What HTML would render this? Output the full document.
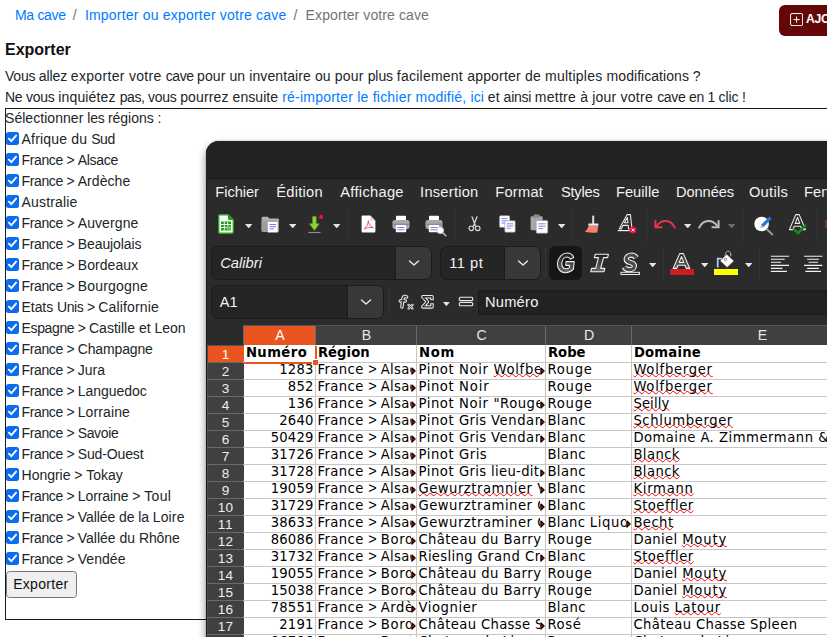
<!DOCTYPE html>
<html lang="fr">
<head>
<meta charset="utf-8">
<title>Exporter votre cave</title>
<style>
html,body{margin:0;padding:0;background:#fff;}
html{overflow:hidden;}
body{width:827px;height:637px;overflow:hidden;font-family:"Liberation Sans",sans-serif;color:#212529;}
#root{position:relative;width:827px;height:637px;overflow:hidden;contain:paint;}
.a{position:absolute;display:block;}
.t{position:absolute;white-space:pre;}
.t u{text-decoration:underline wavy #f00;text-decoration-thickness:1.3px;text-underline-offset:-1.4px;text-decoration-skip-ink:none;}
.clip{position:absolute;overflow:hidden;}
#box{left:5px;top:108px;width:840px;height:510px;border:1px solid #1a1a1a;}
#addbtn{left:779px;top:5px;width:80px;height:31px;background:#640707;border-radius:6px;}
.cb{left:6px;width:13px;height:13px;border-radius:2.5px;background:#0b6cf2;}
.cb svg{display:block;}
#exp{left:6px;top:571px;width:71px;height:27px;box-sizing:border-box;border:1px solid #767676;border-radius:3.5px;background:#efefef;}
#winshadow{left:206px;top:141px;width:700px;height:600px;border-top-left-radius:13px;box-shadow:0 4px 9px 0 rgba(0,0,0,.45),0 0 2px rgba(0,0,0,.2);}
#win{left:206px;top:141px;width:700px;height:600px;background:#2b2b2b;border-top-left-radius:13px;overflow:hidden;box-shadow:inset 1px 0 0 #1c1c1c;}
#title{left:0;top:0;width:700px;height:37px;background:#222;border-bottom:1px solid #171717;}
.sep{width:1px;background:#353535;}
.box{box-sizing:border-box;border:1px solid #1b1b1b;border-radius:7px;background:#252525;overflow:hidden;}
.box .dd{position:absolute;top:0;bottom:0;right:0;background:#383838;border-left:1px solid #1b1b1b;}
#sheet{left:244px;top:345px;width:600px;height:300px;background:#fff;}
#colhdr{left:243px;top:325px;width:600px;height:20px;background:#404040;box-shadow:inset 0 1px 0 #555;}
#rowhdr{left:208px;top:345px;width:36px;height:300px;background:#404040;}
.sel{background:#e95420;}
.hs{background:#6a6a6a;}
.gl{background:#c6c6c6;}
#cursor{border:solid #e95420;border-width:0 2px 2px 0;box-sizing:content-box;}
</style>
</head>
<body>
<div id="root">
<div class="a" id="box"></div>
<div class="a" id="addbtn"><svg class="a" style="left:11px;top:7.7px" width="13.2" height="13.2" viewBox="0 0 13.2 13.2"><rect x=".55" y=".55" width="12.1" height="12.1" rx="1.5" fill="none" stroke="#fff" stroke-width="1"/><path d="M6.6 3.5v6.2M3.5 6.6h6.2" stroke="#fff" stroke-width="1"/></svg></div>
<div class="a cb" style="top:132px"><svg width="13" height="13" viewBox="0 0 13 13"><path d="M2.9 6.7l2.4 2.5 4.8-5.6" fill="none" stroke="#fff" stroke-width="1.9" stroke-linecap="round" stroke-linejoin="round"/></svg></div>
<div class="a cb" style="top:153px"><svg width="13" height="13" viewBox="0 0 13 13"><path d="M2.9 6.7l2.4 2.5 4.8-5.6" fill="none" stroke="#fff" stroke-width="1.9" stroke-linecap="round" stroke-linejoin="round"/></svg></div>
<div class="a cb" style="top:174px"><svg width="13" height="13" viewBox="0 0 13 13"><path d="M2.9 6.7l2.4 2.5 4.8-5.6" fill="none" stroke="#fff" stroke-width="1.9" stroke-linecap="round" stroke-linejoin="round"/></svg></div>
<div class="a cb" style="top:195px"><svg width="13" height="13" viewBox="0 0 13 13"><path d="M2.9 6.7l2.4 2.5 4.8-5.6" fill="none" stroke="#fff" stroke-width="1.9" stroke-linecap="round" stroke-linejoin="round"/></svg></div>
<div class="a cb" style="top:216px"><svg width="13" height="13" viewBox="0 0 13 13"><path d="M2.9 6.7l2.4 2.5 4.8-5.6" fill="none" stroke="#fff" stroke-width="1.9" stroke-linecap="round" stroke-linejoin="round"/></svg></div>
<div class="a cb" style="top:237px"><svg width="13" height="13" viewBox="0 0 13 13"><path d="M2.9 6.7l2.4 2.5 4.8-5.6" fill="none" stroke="#fff" stroke-width="1.9" stroke-linecap="round" stroke-linejoin="round"/></svg></div>
<div class="a cb" style="top:258px"><svg width="13" height="13" viewBox="0 0 13 13"><path d="M2.9 6.7l2.4 2.5 4.8-5.6" fill="none" stroke="#fff" stroke-width="1.9" stroke-linecap="round" stroke-linejoin="round"/></svg></div>
<div class="a cb" style="top:279px"><svg width="13" height="13" viewBox="0 0 13 13"><path d="M2.9 6.7l2.4 2.5 4.8-5.6" fill="none" stroke="#fff" stroke-width="1.9" stroke-linecap="round" stroke-linejoin="round"/></svg></div>
<div class="a cb" style="top:300px"><svg width="13" height="13" viewBox="0 0 13 13"><path d="M2.9 6.7l2.4 2.5 4.8-5.6" fill="none" stroke="#fff" stroke-width="1.9" stroke-linecap="round" stroke-linejoin="round"/></svg></div>
<div class="a cb" style="top:321px"><svg width="13" height="13" viewBox="0 0 13 13"><path d="M2.9 6.7l2.4 2.5 4.8-5.6" fill="none" stroke="#fff" stroke-width="1.9" stroke-linecap="round" stroke-linejoin="round"/></svg></div>
<div class="a cb" style="top:342px"><svg width="13" height="13" viewBox="0 0 13 13"><path d="M2.9 6.7l2.4 2.5 4.8-5.6" fill="none" stroke="#fff" stroke-width="1.9" stroke-linecap="round" stroke-linejoin="round"/></svg></div>
<div class="a cb" style="top:363px"><svg width="13" height="13" viewBox="0 0 13 13"><path d="M2.9 6.7l2.4 2.5 4.8-5.6" fill="none" stroke="#fff" stroke-width="1.9" stroke-linecap="round" stroke-linejoin="round"/></svg></div>
<div class="a cb" style="top:384px"><svg width="13" height="13" viewBox="0 0 13 13"><path d="M2.9 6.7l2.4 2.5 4.8-5.6" fill="none" stroke="#fff" stroke-width="1.9" stroke-linecap="round" stroke-linejoin="round"/></svg></div>
<div class="a cb" style="top:405px"><svg width="13" height="13" viewBox="0 0 13 13"><path d="M2.9 6.7l2.4 2.5 4.8-5.6" fill="none" stroke="#fff" stroke-width="1.9" stroke-linecap="round" stroke-linejoin="round"/></svg></div>
<div class="a cb" style="top:426px"><svg width="13" height="13" viewBox="0 0 13 13"><path d="M2.9 6.7l2.4 2.5 4.8-5.6" fill="none" stroke="#fff" stroke-width="1.9" stroke-linecap="round" stroke-linejoin="round"/></svg></div>
<div class="a cb" style="top:447px"><svg width="13" height="13" viewBox="0 0 13 13"><path d="M2.9 6.7l2.4 2.5 4.8-5.6" fill="none" stroke="#fff" stroke-width="1.9" stroke-linecap="round" stroke-linejoin="round"/></svg></div>
<div class="a cb" style="top:468px"><svg width="13" height="13" viewBox="0 0 13 13"><path d="M2.9 6.7l2.4 2.5 4.8-5.6" fill="none" stroke="#fff" stroke-width="1.9" stroke-linecap="round" stroke-linejoin="round"/></svg></div>
<div class="a cb" style="top:489px"><svg width="13" height="13" viewBox="0 0 13 13"><path d="M2.9 6.7l2.4 2.5 4.8-5.6" fill="none" stroke="#fff" stroke-width="1.9" stroke-linecap="round" stroke-linejoin="round"/></svg></div>
<div class="a cb" style="top:510px"><svg width="13" height="13" viewBox="0 0 13 13"><path d="M2.9 6.7l2.4 2.5 4.8-5.6" fill="none" stroke="#fff" stroke-width="1.9" stroke-linecap="round" stroke-linejoin="round"/></svg></div>
<div class="a cb" style="top:531px"><svg width="13" height="13" viewBox="0 0 13 13"><path d="M2.9 6.7l2.4 2.5 4.8-5.6" fill="none" stroke="#fff" stroke-width="1.9" stroke-linecap="round" stroke-linejoin="round"/></svg></div>
<div class="a cb" style="top:552px"><svg width="13" height="13" viewBox="0 0 13 13"><path d="M2.9 6.7l2.4 2.5 4.8-5.6" fill="none" stroke="#fff" stroke-width="1.9" stroke-linecap="round" stroke-linejoin="round"/></svg></div>
<div class="a" id="exp"></div>
<span class="t" style="left:15.00px;top:5.85px;font-size:14px;line-height:18px;letter-spacing:-0.310px;color:#007bff;">Ma cave</span>
<span class="t" style="left:72.75px;top:5.85px;font-size:14px;line-height:18px;letter-spacing:1.266px;color:#6c757d;">/</span>
<span class="t" style="left:84.91px;top:5.85px;font-size:14px;line-height:18px;letter-spacing:0.202px;color:#007bff;">Importer ou exporter votre cave</span>
<span class="t" style="left:293.47px;top:5.85px;font-size:14px;line-height:18px;letter-spacing:1.266px;color:#6c757d;">/</span>
<span class="t" style="left:305.62px;top:5.85px;font-size:14px;line-height:18px;letter-spacing:0.104px;color:#6c757d;">Exporter votre cave</span>
<span class="t" style="left:5.00px;top:38.86px;font-size:16px;line-height:21px;color:#111;font-weight:bold;">Exporter</span>
<span class="t" style="left:5.00px;top:66.75px;font-size:14px;line-height:18px;letter-spacing:-0.234px;color:#212529;">Vous </span>
<span class="t" style="left:38.86px;top:66.75px;font-size:14px;line-height:18px;letter-spacing:-0.130px;color:#212529;">allez </span>
<span class="t" style="left:70.77px;top:66.75px;font-size:14px;line-height:18px;letter-spacing:0.328px;color:#212529;">exporter </span>
<span class="t" style="left:128.97px;top:66.75px;font-size:14px;line-height:18px;letter-spacing:0.286px;color:#212529;">votre </span>
<span class="t" style="left:165.70px;top:66.75px;font-size:14px;line-height:18px;letter-spacing:-0.416px;color:#212529;">cave </span>
<span class="t" style="left:197.09px;top:66.75px;font-size:14px;line-height:18px;letter-spacing:0.090px;color:#212529;">pour un </span>
<span class="t" style="left:249.19px;top:66.75px;font-size:14px;line-height:18px;letter-spacing:0.109px;color:#212529;">inventaire ou </span>
<span class="t" style="left:334.78px;top:66.75px;font-size:14px;line-height:18px;letter-spacing:0.194px;color:#212529;">pour </span>
<span class="t" style="left:367.67px;top:66.75px;font-size:14px;line-height:18px;letter-spacing:-0.087px;color:#212529;">plus </span>
<span class="t" style="left:396.81px;top:66.75px;font-size:14px;line-height:18px;letter-spacing:0.240px;color:#212529;">facilement </span>
<span class="t" style="left:467.16px;top:66.75px;font-size:14px;line-height:18px;letter-spacing:0.202px;color:#212529;">apporter de </span>
<span class="t" style="left:545.08px;top:66.75px;font-size:14px;line-height:18px;letter-spacing:0.239px;color:#212529;">multiples </span>
<span class="t" style="left:606.61px;top:66.75px;font-size:14px;line-height:18px;letter-spacing:0.047px;color:#212529;">modifications ?</span>
<span class="t" style="left:5.00px;top:87.55px;font-size:14px;line-height:18px;letter-spacing:-0.286px;color:#212529;">Ne </span>
<span class="t" style="left:25.94px;top:87.55px;font-size:14px;line-height:18px;letter-spacing:-0.237px;color:#212529;">vous </span>
<span class="t" style="left:58.22px;top:87.55px;font-size:14px;line-height:18px;letter-spacing:0.163px;color:#212529;">inquiétez </span>
<span class="t" style="left:119.78px;top:87.55px;font-size:14px;line-height:18px;letter-spacing:-0.447px;color:#212529;">pas, </span>
<span class="t" style="left:147.91px;top:87.55px;font-size:14px;line-height:18px;letter-spacing:-0.237px;color:#212529;">vous </span>
<span class="t" style="left:180.19px;top:87.55px;font-size:14px;line-height:18px;letter-spacing:0.125px;color:#212529;">pourrez </span>
<span class="t" style="left:232.55px;top:87.55px;font-size:14px;line-height:18px;letter-spacing:0.070px;color:#212529;">ensuite </span>
<span class="t" style="left:282.16px;top:87.55px;font-size:14px;line-height:18px;letter-spacing:0.228px;color:#007bff;">ré-importer le </span>
<span class="t" style="left:372.72px;top:87.55px;font-size:14px;line-height:18px;letter-spacing:0.207px;color:#007bff;">fichier </span>
<span class="t" style="left:415.61px;top:87.55px;font-size:14px;line-height:18px;letter-spacing:0.229px;color:#007bff;">modifié, </span>
<span class="t" style="left:470.59px;top:87.55px;font-size:14px;line-height:18px;letter-spacing:0.031px;color:#007bff;">ici</span>
<span class="t" style="left:483.92px;top:87.55px;font-size:14px;line-height:18px;letter-spacing:0.047px;color:#212529;"> et </span>
<span class="t" style="left:503.58px;top:87.55px;font-size:14px;line-height:18px;letter-spacing:-0.234px;color:#212529;">ainsi </span>
<span class="t" style="left:534.86px;top:87.55px;font-size:14px;line-height:18px;letter-spacing:0.245px;color:#212529;">mettre à </span>
<span class="t" style="left:592.31px;top:87.55px;font-size:14px;line-height:18px;letter-spacing:0.175px;color:#212529;">jour </span>
<span class="t" style="left:620.42px;top:87.55px;font-size:14px;line-height:18px;letter-spacing:0.286px;color:#212529;">votre </span>
<span class="t" style="left:657.16px;top:87.55px;font-size:14px;line-height:18px;letter-spacing:-0.319px;color:#212529;">cave en 1 </span>
<span class="t" style="left:718.58px;top:87.55px;font-size:14px;line-height:18px;letter-spacing:-0.141px;color:#212529;">clic !</span>
<span class="t" style="left:5.00px;top:109.25px;font-size:14px;line-height:18px;letter-spacing:0.044px;color:#212529;">Sélectionner </span>
<span class="t" style="left:87.30px;top:109.25px;font-size:14px;line-height:18px;letter-spacing:-0.277px;color:#212529;">les </span>
<span class="t" style="left:107.98px;top:109.25px;font-size:14px;line-height:18px;letter-spacing:-0.035px;color:#212529;">régions :</span>
<span class="t" style="left:21.60px;top:130.45px;font-size:14px;line-height:18px;letter-spacing:0.176px;color:#212529;">Afrique du </span>
<span class="t" style="left:91.26px;top:130.45px;font-size:14px;line-height:18px;letter-spacing:-0.464px;color:#212529;">Sud</span>
<span class="t" style="left:21.60px;top:151.45px;font-size:14px;line-height:18px;letter-spacing:-0.378px;color:#212529;">France &gt; </span>
<span class="t" style="left:77.72px;top:151.45px;font-size:14px;line-height:18px;letter-spacing:-0.297px;color:#212529;">Alsace</span>
<span class="t" style="left:21.60px;top:172.45px;font-size:14px;line-height:18px;letter-spacing:-0.378px;color:#212529;">France &gt; </span>
<span class="t" style="left:77.72px;top:172.45px;font-size:14px;line-height:18px;letter-spacing:0.056px;color:#212529;">Ardèche</span>
<span class="t" style="left:21.60px;top:193.45px;font-size:14px;line-height:18px;letter-spacing:0.167px;color:#212529;">Australie</span>
<span class="t" style="left:21.60px;top:214.45px;font-size:14px;line-height:18px;letter-spacing:-0.378px;color:#212529;">France &gt; </span>
<span class="t" style="left:77.72px;top:214.45px;font-size:14px;line-height:18px;letter-spacing:0.092px;color:#212529;">Auvergne</span>
<span class="t" style="left:21.60px;top:235.45px;font-size:14px;line-height:18px;letter-spacing:-0.378px;color:#212529;">France &gt; </span>
<span class="t" style="left:77.72px;top:235.45px;font-size:14px;line-height:18px;letter-spacing:-0.083px;color:#212529;">Beaujolais</span>
<span class="t" style="left:21.60px;top:256.45px;font-size:14px;line-height:18px;letter-spacing:-0.378px;color:#212529;">France &gt; </span>
<span class="t" style="left:77.72px;top:256.45px;font-size:14px;line-height:18px;letter-spacing:0.078px;color:#212529;">Bordeaux</span>
<span class="t" style="left:21.60px;top:277.45px;font-size:14px;line-height:18px;letter-spacing:-0.378px;color:#212529;">France &gt; </span>
<span class="t" style="left:77.72px;top:277.45px;font-size:14px;line-height:18px;letter-spacing:0.208px;color:#212529;">Bourgogne</span>
<span class="t" style="left:21.60px;top:298.45px;font-size:14px;line-height:18px;letter-spacing:-0.081px;color:#212529;">Etats </span>
<span class="t" style="left:56.91px;top:298.45px;font-size:14px;line-height:18px;letter-spacing:-0.375px;color:#212529;">Unis &gt; </span>
<span class="t" style="left:98.26px;top:298.45px;font-size:14px;line-height:18px;letter-spacing:0.167px;color:#212529;">Californie</span>
<span class="t" style="left:21.60px;top:319.45px;font-size:14px;line-height:18px;letter-spacing:-0.383px;color:#212529;">Espagne &gt; </span>
<span class="t" style="left:89.01px;top:319.45px;font-size:14px;line-height:18px;letter-spacing:0.010px;color:#212529;">Castille et </span>
<span class="t" style="left:154.49px;top:319.45px;font-size:14px;line-height:18px;letter-spacing:-0.027px;color:#212529;">Leon</span>
<span class="t" style="left:21.60px;top:340.45px;font-size:14px;line-height:18px;letter-spacing:-0.378px;color:#212529;">France &gt; </span>
<span class="t" style="left:77.72px;top:340.45px;font-size:14px;line-height:18px;letter-spacing:-0.141px;color:#212529;">Champagne</span>
<span class="t" style="left:21.60px;top:361.45px;font-size:14px;line-height:18px;letter-spacing:-0.378px;color:#212529;">France &gt; </span>
<span class="t" style="left:77.72px;top:361.45px;font-size:14px;line-height:18px;letter-spacing:0.035px;color:#212529;">Jura</span>
<span class="t" style="left:21.60px;top:382.45px;font-size:14px;line-height:18px;letter-spacing:-0.378px;color:#212529;">France &gt; </span>
<span class="t" style="left:77.72px;top:382.45px;font-size:14px;line-height:18px;letter-spacing:-0.033px;color:#212529;">Languedoc</span>
<span class="t" style="left:21.60px;top:403.45px;font-size:14px;line-height:18px;letter-spacing:-0.378px;color:#212529;">France &gt; </span>
<span class="t" style="left:77.72px;top:403.45px;font-size:14px;line-height:18px;letter-spacing:0.107px;color:#212529;">Lorraine</span>
<span class="t" style="left:21.60px;top:424.45px;font-size:14px;line-height:18px;letter-spacing:-0.378px;color:#212529;">France &gt; </span>
<span class="t" style="left:77.72px;top:424.45px;font-size:14px;line-height:18px;letter-spacing:-0.359px;color:#212529;">Savoie</span>
<span class="t" style="left:21.60px;top:445.45px;font-size:14px;line-height:18px;letter-spacing:-0.378px;color:#212529;">France &gt; </span>
<span class="t" style="left:77.72px;top:445.45px;font-size:14px;line-height:18px;letter-spacing:-0.130px;color:#212529;">Sud-Ouest</span>
<span class="t" style="left:21.60px;top:466.45px;font-size:14px;line-height:18px;letter-spacing:-0.023px;color:#212529;">Hongrie &gt; </span>
<span class="t" style="left:86.35px;top:466.45px;font-size:14px;line-height:18px;letter-spacing:-0.056px;color:#212529;">Tokay</span>
<span class="t" style="left:21.60px;top:487.45px;font-size:14px;line-height:18px;letter-spacing:-0.378px;color:#212529;">France &gt; </span>
<span class="t" style="left:77.72px;top:487.45px;font-size:14px;line-height:18px;letter-spacing:-0.071px;color:#212529;">Lorraine &gt; </span>
<span class="t" style="left:144.27px;top:487.45px;font-size:14px;line-height:18px;letter-spacing:0.320px;color:#212529;">Toul</span>
<span class="t" style="left:21.60px;top:508.45px;font-size:14px;line-height:18px;letter-spacing:-0.378px;color:#212529;">France &gt; </span>
<span class="t" style="left:77.72px;top:508.45px;font-size:14px;line-height:18px;letter-spacing:-0.072px;color:#212529;">Vallée de la </span>
<span class="t" style="left:152.80px;top:508.45px;font-size:14px;line-height:18px;letter-spacing:0.122px;color:#212529;">Loire</span>
<span class="t" style="left:21.60px;top:529.45px;font-size:14px;line-height:18px;letter-spacing:-0.378px;color:#212529;">France &gt; </span>
<span class="t" style="left:77.72px;top:529.45px;font-size:14px;line-height:18px;letter-spacing:0.002px;color:#212529;">Vallée du </span>
<span class="t" style="left:138.97px;top:529.45px;font-size:14px;line-height:18px;letter-spacing:-0.122px;color:#212529;">Rhône</span>
<span class="t" style="left:21.60px;top:550.45px;font-size:14px;line-height:18px;letter-spacing:-0.378px;color:#212529;">France &gt; </span>
<span class="t" style="left:77.72px;top:550.45px;font-size:14px;line-height:18px;letter-spacing:0.044px;color:#212529;">Vendée</span>
<span class="t" style="left:13.20px;top:574.65px;font-size:14px;line-height:18px;letter-spacing:0.293px;color:#111;">Exporter</span>
<span class="t" style="left:806.00px;top:11.46px;font-size:12.25px;line-height:16px;letter-spacing:-0.324px;color:#fff;font-weight:bold;">AJOUTER</span>
<div class="a" id="winshadow"></div>
<div class="a" id="win">
<div class="a" id="title"></div>
</div>
<svg class="a" style="left:218px;top:214px" width="16" height="20" viewBox="0 0 16 20"><path d="M1.5 .7h8.6l5.2 5.2v11.9a1.5 1.5 0 0 1-1.5 1.5H1.5A1 1 0 0 1 .7 18.300V1.500a.8.8 0 0 1 .8-.8z" fill="#fff" stroke="#27a21b" stroke-width="1.4"/><path d="M10 .7v4.400a.9.9 0 0 0 .9.900h4.400z" fill="#27a21b"/><rect x="3" y="7.5" width="10" height="9" fill="#1f9a1a"/><path d="M3 10.500h10M3 13.500h10M6.300 7.500v9M9.600 7.500v9" stroke="#fff" stroke-width=".9"/><rect x="8.500" y="12" width="4" height="4.500" fill="#5fd05a"/></svg>
<svg class="a" style="left:244.8px;top:224px" width="7.4" height="4.4" viewBox="0 0 7.4 4.4"><path d="M0 0H7.4L3.7 4.4z" fill="#e4e4e4"/></svg>
<svg class="a" style="left:261px;top:216px" width="19" height="17" viewBox="0 0 19 17"><path d="M.6 2.200a1.400 1.400 0 0 1 1.400-1.400h4.600l1.800 1.800h8.200a1.400 1.400 0 0 1 1.400 1.400v10.600a1.400 1.400 0 0 1-1.400 1.400H2a1.400 1.400 0 0 1-1.400-1.400z" fill="#b4b4b4"/><path d="M.6 4.500h17.400v10a1.400 1.400 0 0 1-1.400 1.400H2a1.400 1.400 0 0 1-1.400-1.400z" fill="#9d9d9d"/><rect x="6.500" y="5.500" width="10.500" height="11" rx=".8" fill="#fff" stroke="#8a8a8a" stroke-width=".5"/><path d="M8.500 8.500h6.500M8.500 10.700h6.500M8.500 12.900h4.500" stroke="#6f7df0" stroke-width="1"/></svg>
<svg class="a" style="left:288.8px;top:224px" width="7.4" height="4.4" viewBox="0 0 7.4 4.4"><path d="M0 0H7.4L3.7 4.4z" fill="#e4e4e4"/></svg>
<svg class="a" style="left:306px;top:214px" width="19" height="20" viewBox="0 0 19 20"><path d="M6.600 2.400h3.600v7.400h3.200L8.400 16.400 3.400 9.800h3.200z" fill="#93d23a" stroke="#5a9e10" stroke-width=".7" stroke-linejoin="round"/><path d="M2.300 18.500h12.200" stroke="#8e8e8e" stroke-width="1.200"/><circle cx="15.100" cy="2.900" r="2.100" fill="#e8123c"/></svg>
<svg class="a" style="left:332.8px;top:224px" width="7.4" height="4.4" viewBox="0 0 7.4 4.4"><path d="M0 0H7.4L3.7 4.4z" fill="#e4e4e4"/></svg>
<div class="a sep" style="left:347px;top:208px;height:33px"></div>
<svg class="a" style="left:361px;top:215px" width="15" height="18" viewBox="0 0 15 18"><path d="M1.800 .6h7.500l5.100 5.100v10.600a1.200 1.200 0 0 1-1.200 1.200H1.800a1.200 1.200 0 0 1-1.200-1.200V1.800A1.200 1.200 0 0 1 1.800 .6z" fill="#fff"/><path d="M9.300 .6v4a1.100 1.100 0 0 0 1.100 1.100h4z" fill="#d8d8d8"/><path d="M3 13.800c2.500-1.500 4.200-4.600 4.300-8.300.1 3.400 2 6.200 5.200 7.200-3.500-.6-6.700.1-9.500 1.100z" fill="none" stroke="#ea5a70" stroke-width="1" stroke-linejoin="round"/></svg>
<svg class="a" style="left:392px;top:215px" width="18" height="18" viewBox="0 0 18 18"><rect x="4" y=".8" width="10" height="5.500" rx=".8" fill="#fff"/><rect x=".5" y="5" width="17" height="9" rx="2.200" fill="#a9a9a9"/><rect x="1.500" y="8.600" width="15" height="2" fill="#8a8a8a"/><rect x="3.800" y="10" width="10.400" height="7.200" rx=".8" fill="#fff"/><path d="M5.500 12.500h7M5.500 14.800h7" stroke="#7a86f0" stroke-width="1.100"/></svg>
<svg class="a" style="left:425px;top:215px" width="18" height="18" viewBox="0 0 18 18"><rect x="4" y=".8" width="10" height="5.500" rx=".8" fill="#fff"/><rect x=".5" y="5" width="17" height="9" rx="2.200" fill="#a9a9a9"/><rect x="1.500" y="8.600" width="15" height="2" fill="#8a8a8a"/><rect x="3.800" y="10" width="10.400" height="7.200" rx=".8" fill="#fff"/><path d="M5.500 12.500h7M5.500 14.800h7" stroke="#7a86f0" stroke-width="1.100"/></svg>
<svg class="a" style="left:436px;top:225.5px" width="12" height="12" viewBox="0 0 12 12"><circle cx="4.400" cy="4.400" r="3.200" fill="#fff" stroke="#cfcfcf" stroke-width=".9"/><path d="M7 7l2.800 2.800" stroke="#c4c4c4" stroke-width="1.500" stroke-linecap="round"/></svg>
<div class="a sep" style="left:454px;top:208px;height:33px"></div>
<svg class="a" style="left:468px;top:216px" width="13" height="16" viewBox="0 0 13 16"><path d="M4 .8l3.600 9.400M9 .8L5.400 10.200" stroke="#d6d6d6" stroke-width="1.300" stroke-linecap="round" fill="none"/><circle cx="3.300" cy="12.300" r="2.300" fill="none" stroke="#d6d6d6" stroke-width="1.200"/><circle cx="9.700" cy="12.300" r="2.300" fill="none" stroke="#d6d6d6" stroke-width="1.200"/></svg>
<svg class="a" style="left:499px;top:215px" width="17" height="18" viewBox="0 0 17 18"><rect x=".6" y=".8" width="10" height="11.500" rx=".9" fill="#fff" stroke="#bdbdbd" stroke-width=".5"/><path d="M2.500 3.600h6M2.500 5.800h6M2.500 8h4" stroke="#7a86f0" stroke-width="1"/><rect x="5.800" y="5.800" width="10.400" height="11.400" rx=".9" fill="#fff" stroke="#9a9a9a" stroke-width=".6"/><path d="M7.800 8.800h6.400M7.800 11h6.400M7.800 13.200h4.200" stroke="#7a86f0" stroke-width="1"/></svg>
<svg class="a" style="left:530px;top:214px" width="19" height="20" viewBox="0 0 19 20"><rect x=".6" y="2.200" width="12" height="14" rx="1.400" fill="#a8a8a8"/><rect x="3.600" y=".6" width="6" height="3.400" rx="1" fill="#8c8c8c"/><rect x="6.200" y="6.400" width="11.600" height="12.800" rx=".9" fill="#fff" stroke="#8e8e8e" stroke-width=".6"/><path d="M8.400 9.800h7.200M8.400 12.200h7.200M8.400 14.600h4.600" stroke="#7a86f0" stroke-width="1"/></svg>
<svg class="a" style="left:557.8px;top:224px" width="7.4" height="4.4" viewBox="0 0 7.4 4.4"><path d="M0 0H7.4L3.7 4.4z" fill="#e4e4e4"/></svg>
<div class="a sep" style="left:572px;top:208px;height:33px"></div>
<svg class="a" style="left:584px;top:215px" width="17" height="19" viewBox="0 0 17 19"><rect x="8.200" y=".6" width="2" height="8.400" rx=".6" fill="#dcdcdc"/><rect x="4.400" y="8.400" width="10" height="2.300" rx=".5" fill="#ececec"/><path d="M4.400 11h10l-1.200 6.600c-4.300.5-8.300.2-12.400-.9 1.900-1.400 3-3.200 3.600-5.700z" fill="#f4826e"/></svg>
<svg class="a" style="left:616px;top:213px" width="21" height="21" viewBox="0 0 21 21"><path d="M3.200 16L11.200 1.600h3.200L16 16h-3.400l-.4-3.600H7L5.200 16zM8.400 9.800h3.600L11.400 4.600z" fill="#2b2b2b" stroke="#ececec" stroke-width="1.100" stroke-linejoin="round"/><path d="M1.800 17.600h14" stroke="#ececec" stroke-width="1.200"/><circle cx="16.900" cy="17" r="3.500" fill="#e8123c"/><path d="M15.500 15.600l2.800 2.800M18.300 15.600l-2.800 2.800" stroke="#fff" stroke-width="1"/></svg>
<div class="a sep" style="left:646px;top:208px;height:33px"></div>
<svg class="a" style="left:653px;top:217px" width="24" height="14" viewBox="0 0 24 14"><path d="M3.400 9.300C8 2.600 17.500 1.600 21.800 10.600" fill="none" stroke="#ed3146" stroke-width="2" stroke-linecap="round"/><path d="M2.400 3.300v7h7" fill="none" stroke="#ed3146" stroke-width="2" stroke-linecap="butt" stroke-linejoin="miter"/></svg>
<svg class="a" style="left:683.8px;top:224px" width="7.4" height="4.4" viewBox="0 0 7.4 4.4"><path d="M0 0H7.4L3.7 4.4z" fill="#e4e4e4"/></svg>
<svg class="a" style="left:698px;top:217px" width="24" height="14" viewBox="0 0 24 14"><path d="M19.600 9.300C15 2.600 5.500 1.600 1.200 10.600" fill="none" stroke="#bdbdbd" stroke-width="2" stroke-linecap="round"/><path d="M20.600 3.300v7h-7" fill="none" stroke="#bdbdbd" stroke-width="2" stroke-linecap="butt" stroke-linejoin="miter"/></svg>
<svg class="a" style="left:727.8px;top:224px" width="7.4" height="4.4" viewBox="0 0 7.4 4.4"><path d="M0 0H7.4L3.7 4.4z" fill="#6c6c6c"/></svg>
<div class="a sep" style="left:742px;top:208px;height:33px"></div>
<svg class="a" style="left:753px;top:213px" width="22" height="23" viewBox="0 0 22 23"><circle cx="8.600" cy="11" r="7.300" fill="#fff"/><path d="M14 16.400l5.400 5" stroke="#9a9a9a" stroke-width="2" stroke-linecap="round"/><path d="M8.200 11.800L16.400 3.400l2.300 2.300-8.200 8.300-3 .8z" fill="#2f6fe0"/><path d="M7.500 14.800l.7-3 2.300 2.300z" fill="#f0c08a"/></svg>
<svg class="a" style="left:787px;top:213px" width="22" height="23" viewBox="0 0 22 23"><path d="M2.400 16.600L8.800 1.600h3.400l6.200 15h-3.500l-1.300-3.400H7.200l-1.300 3.400zM8.200 10.400h4.500L10.500 4.400z" fill="#2b2b2b" stroke="#ececec" stroke-width="1.100" stroke-linejoin="round"/><path d="M7.200 16.400l3.800 3.800 7.200-7.600" fill="none" stroke="#128a1c" stroke-width="2.700" stroke-linecap="round" stroke-linejoin="round"/></svg>
<div class="a sep" style="left:817px;top:208px;height:33px"></div>
<div class="a" style="left:824.500px;top:220px;width:8px;height:8px;background:#762a7a;border-radius:1px"></div>
<div class="a box" style="left:211px;top:246px;width:221px;height:34px"><div class="dd" style="width:35px"></div></div>
<svg class="a" style="left:407.9px;top:259.4px" width="12" height="8" viewBox="0 0 12 8"><path d="M1.5 2L6 6l4.5-4" fill="none" stroke="#e8e8e8" stroke-width="1.4" stroke-linecap="round" stroke-linejoin="round"/></svg>
<div class="a box" style="left:440px;top:246px;width:101px;height:34px"><div class="dd" style="width:35px"></div></div>
<svg class="a" style="left:516.7px;top:259.4px" width="12" height="8" viewBox="0 0 12 8"><path d="M1.5 2L6 6l4.5-4" fill="none" stroke="#e8e8e8" stroke-width="1.4" stroke-linecap="round" stroke-linejoin="round"/></svg>
<div class="a sep" style="left:545px;top:248px;height:31px"></div>
<div class="a" style="left:549px;top:246px;width:33px;height:34px;background:#161616;border-radius:6px"></div>
<svg class="a" width="0" height="0" style="left:0;top:0"><defs><linearGradient id="lg" x1="0" y1="0" x2="0" y2="1"><stop offset="0" stop-color="#1d1d1d"/><stop offset="1" stop-color="#6a6a6a"/></linearGradient></defs></svg>
<svg class="a" style="left:554.5px;top:251px" width="22" height="24" viewBox="0 0 22 24"><path transform="translate(1.900 0) skewX(-6) scale(.94 1)" d="M18.600 6.400C17 3.600 14.400 2 11.400 2 6 2 2 6.200 2 11.850 2 17.500 6 21.700 11.400 21.700c3.200 0 6-1.100 8.200-3.300V10.600H11v3.800h4.200v2.200c-1 .8-2.300 1.100-3.700 1.100-2.900 0-4.900-2.400-4.900-5.850C6.600 8.400 8.600 6 11.500 6c1.700 0 3 .8 3.700 2.300z" fill="url(#lg)" stroke="#f0f0f0" stroke-width="1.100" stroke-linejoin="round"/></svg>
<svg class="a" style="left:589px;top:253px" width="21" height="20" viewBox="0 0 21 20"><path d="M6.200 1.300h13.200l-.8 3.300h-4.100L11.700 15.400h4.100l-.8 3.300H1.800l.8-3.300h4.100L9.500 4.600H5.400z" fill="url(#lg)" stroke="#f0f0f0" stroke-width="1.100" stroke-linejoin="round"/></svg>
<svg class="a" style="left:620px;top:252px" width="22" height="24" viewBox="0 0 22 24"><g transform="translate(1.800 0) skewX(-8)"><path d="M15.200 5.800C13.800 3.700 11.900 3.100 10 3.100 7.100 3.100 5.400 4.700 5.400 6.600c0 2.100 1.700 3.100 4.700 3.900 3 .8 4.500 1.900 4.500 3.900 0 2.100-1.800 3.300-4.500 3.300-2.400 0-4.300-.9-5.500-2.900" fill="none" stroke="#f0f0f0" stroke-width="5.200" stroke-linecap="butt"/><path d="M15.200 5.800C13.800 3.700 11.900 3.100 10 3.100 7.100 3.100 5.400 4.700 5.400 6.600c0 2.100 1.700 3.100 4.700 3.900 3 .8 4.500 1.900 4.500 3.900 0 2.100-1.800 3.300-4.500 3.300-2.400 0-4.300-.9-5.500-2.900" fill="none" stroke="#4a4a4a" stroke-width="3" stroke-linecap="butt"/></g><rect x="1" y="20.300" width="18.400" height="2.200" fill="#2b2b2b" stroke="#f0f0f0" stroke-width="1"/></svg>
<svg class="a" style="left:648.8px;top:262.6px" width="7.4" height="4.4" viewBox="0 0 7.4 4.4"><path d="M0 0H7.4L3.7 4.4z" fill="#e4e4e4"/></svg>
<div class="a sep" style="left:663px;top:248px;height:31px"></div>
<svg class="a" style="left:671px;top:252px" width="22" height="18" viewBox="0 0 22 18"><path d="M2.200 16.400L8.700 1.600h3.600l6.500 14.800h-3.600l-1.300-3.200H7.100l-1.300 3.200zM8.200 10.400h4.600L10.500 4.600z" fill="url(#lg)" stroke="#f0f0f0" stroke-width="1.100" stroke-linejoin="round"/></svg>
<div class="a" style="left:670px;top:269px;width:24px;height:6px;background:#d01c1c"></div>
<svg class="a" style="left:700.8px;top:262.6px" width="7.4" height="4.4" viewBox="0 0 7.4 4.4"><path d="M0 0H7.4L3.7 4.4z" fill="#e4e4e4"/></svg>
<svg class="a" style="left:714px;top:249px" width="24" height="20" viewBox="0 0 24 20"><path d="M3.700 18.600V9.600h4.200" fill="none" stroke="#a4d8f4" stroke-width="1.700"/><path d="M11.200 9.800c-.5-4.600.8-7.600 3-7.600 1.900 0 2.900 1.900 2.600 5.200" fill="none" stroke="#bdbdbd" stroke-width="1"/><path d="M12.700 5.200l7.300 6.800-6.900 6.400-7.100-6.600z" fill="#fff" stroke="#2b2b2b" stroke-width=".5"/><circle cx="11.500" cy="10.300" r="1.200" fill="#fff" stroke="#555" stroke-width=".7"/></svg>
<div class="a" style="left:714px;top:269px;width:24px;height:6px;background:#ffff00"></div>
<svg class="a" style="left:744.8px;top:262.6px" width="7.4" height="4.4" viewBox="0 0 7.4 4.4"><path d="M0 0H7.4L3.7 4.4z" fill="#e4e4e4"/></svg>
<div class="a sep" style="left:759px;top:248px;height:31px"></div>
<svg class="a" style="left:770px;top:255px" width="20" height="18" viewBox="0 0 20 18"><path d="M.9 1.300h18.100M.9 4.300h13.800M.9 7.300h10.200M.9 10.400h18.100M.9 13.400h11.600M.9 16.400h16" stroke="#f0f0f0" stroke-width="1.100"/></svg>
<svg class="a" style="left:803px;top:255px" width="20" height="18" viewBox="0 0 20 18"><path d="M1 1.300h18.400M4.200 4.300h11.600M5.600 7.300h9.400M1 10.400h18.400M4.200 13.400h11.600M2.400 16.400h15.600" stroke="#f0f0f0" stroke-width="1.100"/></svg>
<div class="a box" style="left:211px;top:285px;width:173px;height:34px"><div class="dd" style="width:35px"></div></div>
<svg class="a" style="left:360px;top:298px" width="12" height="8" viewBox="0 0 12 8"><path d="M1.5 2L6 6l4.5-4" fill="none" stroke="#e8e8e8" stroke-width="1.4" stroke-linecap="round" stroke-linejoin="round"/></svg>
<div class="a sep" style="left:389px;top:288px;height:28px"></div>
<svg class="a" style="left:398px;top:293.5px" width="17" height="16" viewBox="0 0 17 16"><path d="M8.600 3C7.400 1.900 5.300 2.300 5 4.600L3.900 13M2.300 6.900h5" fill="none" stroke="#ececec" stroke-width="3.500" stroke-linecap="round" stroke-linejoin="round"/><path d="M8.600 3C7.400 1.900 5.300 2.300 5 4.600L3.900 13M2.300 6.900h5" fill="none" stroke="#2b2b2b" stroke-width="1.400" stroke-linecap="round" stroke-linejoin="round"/><path d="M10.600 10.900l3.800 3.600M14.400 10.900l-3.800 3.600" stroke="#ececec" stroke-width="2.300" stroke-linecap="round"/><path d="M10.600 10.900l3.800 3.600M14.400 10.900l-3.800 3.600" stroke="#2b2b2b" stroke-width=".7" stroke-linecap="round"/></svg>
<svg class="a" style="left:420px;top:294px" width="15" height="16" viewBox="0 0 15 16"><path d="M12 4.600V2.700H2.800l4.600 5.100-4.600 5.100H12V11" fill="none" stroke="#ececec" stroke-width="3.500" stroke-linejoin="round" stroke-linecap="square"/><path d="M12 4.600V2.700H2.800l4.600 5.100-4.600 5.100H12V11" fill="none" stroke="#2b2b2b" stroke-width="1.400" stroke-linejoin="round" stroke-linecap="square"/></svg>
<svg class="a" style="left:443px;top:302px" width="6.8" height="4.2" viewBox="0 0 6.8 4.2"><path d="M0 0H6.8L3.4 4.2z" fill="#e4e4e4"/></svg>
<svg class="a" style="left:458px;top:296px" width="16" height="11" viewBox="0 0 16 11"><rect x="1.300" y="1.300" width="13.400" height="3.300" rx="1" fill="none" stroke="#ececec" stroke-width="1.100"/><rect x="1.300" y="6.500" width="13.400" height="3.300" rx="1" fill="none" stroke="#ececec" stroke-width="1.100"/></svg>
<div class="a" style="left:478px;top:290px;width:400px;height:25px;box-sizing:border-box;background:#222;border:1px solid #1a1a1a"></div>
<span class="t" style="left:215.30px;top:182.72px;font-size:14.667px;line-height:19px;letter-spacing:-0.045px;color:#f2f2f2;">Fichier</span>
<span class="t" style="left:276.30px;top:182.72px;font-size:14.667px;line-height:19px;letter-spacing:0.239px;color:#f2f2f2;">Édition</span>
<span class="t" style="left:340.30px;top:182.72px;font-size:14.667px;line-height:19px;letter-spacing:0.295px;color:#f2f2f2;">Affichage</span>
<span class="t" style="left:420.10px;top:182.72px;font-size:14.667px;line-height:19px;letter-spacing:0.243px;color:#f2f2f2;">Insertion</span>
<span class="t" style="left:495.30px;top:182.72px;font-size:14.667px;line-height:19px;letter-spacing:0.224px;color:#f2f2f2;">Format</span>
<span class="t" style="left:560.90px;top:182.72px;font-size:14.667px;line-height:19px;letter-spacing:-0.185px;color:#f2f2f2;">Styles</span>
<span class="t" style="left:615.90px;top:182.72px;font-size:14.667px;line-height:19px;letter-spacing:0.045px;color:#f2f2f2;">Feuille</span>
<span class="t" style="left:675.90px;top:182.72px;font-size:14.667px;line-height:19px;letter-spacing:-0.067px;color:#f2f2f2;">Données</span>
<span class="t" style="left:748.90px;top:182.72px;font-size:14.667px;line-height:19px;letter-spacing:0.299px;color:#f2f2f2;">Outils</span>
<span class="t" style="left:803.90px;top:182.72px;font-size:14.667px;line-height:19px;letter-spacing:0.161px;color:#f2f2f2;">Fenêtre</span>
<span class="t" style="left:220.20px;top:253.52px;font-size:14.667px;line-height:19px;letter-spacing:0.029px;color:#f2f2f2;font-style:italic;">Calibri</span>
<span class="t" style="left:449.20px;top:253.52px;font-size:14.667px;line-height:19px;letter-spacing:0.544px;color:#f2f2f2;">11 pt</span>
<span class="t" style="left:219.80px;top:292.92px;font-size:14.667px;line-height:19px;letter-spacing:-0.070px;color:#f2f2f2;">A1</span>
<span class="t" style="left:484.90px;top:292.92px;font-size:14.667px;line-height:19px;letter-spacing:0.258px;color:#f2f2f2;">Numéro</span>
<div class="a" id="sheet"></div>
<div class="a" id="colhdr"></div>
<div class="a" id="rowhdr"></div>
<div class="a sel" style="left:244px;top:326px;width:71px;height:19px"></div>
<div class="a sel" style="left:208px;top:346px;width:36px;height:16px"></div>
<div class="a" style="left:207px;top:345px;width:1px;height:300px;background:#4c4c4c"></div>
<div class="a hs" style="left:207px;top:345px;width:36px;height:1px;background:#555"></div>
<div class="a hs" style="left:243px;top:326px;width:1px;height:19px"></div>
<div class="a hs" style="left:315px;top:326px;width:1px;height:19px"></div>
<div class="a hs" style="left:416px;top:326px;width:1px;height:19px"></div>
<div class="a hs" style="left:545px;top:326px;width:1px;height:19px"></div>
<div class="a hs" style="left:631px;top:326px;width:1px;height:19px"></div>
<div class="a hs" style="left:207px;top:362px;width:36px;height:1px"></div>
<div class="a hs" style="left:207px;top:379px;width:36px;height:1px"></div>
<div class="a hs" style="left:207px;top:396px;width:36px;height:1px"></div>
<div class="a hs" style="left:207px;top:413px;width:36px;height:1px"></div>
<div class="a hs" style="left:207px;top:430px;width:36px;height:1px"></div>
<div class="a hs" style="left:207px;top:447px;width:36px;height:1px"></div>
<div class="a hs" style="left:207px;top:464px;width:36px;height:1px"></div>
<div class="a hs" style="left:207px;top:481px;width:36px;height:1px"></div>
<div class="a hs" style="left:207px;top:498px;width:36px;height:1px"></div>
<div class="a hs" style="left:207px;top:515px;width:36px;height:1px"></div>
<div class="a hs" style="left:207px;top:532px;width:36px;height:1px"></div>
<div class="a hs" style="left:207px;top:549px;width:36px;height:1px"></div>
<div class="a hs" style="left:207px;top:566px;width:36px;height:1px"></div>
<div class="a hs" style="left:207px;top:583px;width:36px;height:1px"></div>
<div class="a hs" style="left:207px;top:600px;width:36px;height:1px"></div>
<div class="a hs" style="left:207px;top:617px;width:36px;height:1px"></div>
<div class="a hs" style="left:207px;top:634px;width:36px;height:1px"></div>
<div class="a hs" style="left:207px;top:651px;width:36px;height:1px"></div>
<div class="a gl" style="left:315px;top:345px;width:1px;height:300px"></div>
<div class="a gl" style="left:416px;top:345px;width:1px;height:300px"></div>
<div class="a gl" style="left:545px;top:345px;width:1px;height:300px"></div>
<div class="a gl" style="left:631px;top:345px;width:1px;height:300px"></div>
<div class="a gl" style="left:243px;top:362px;width:600px;height:1px"></div>
<div class="a gl" style="left:243px;top:379px;width:600px;height:1px"></div>
<div class="a gl" style="left:243px;top:396px;width:600px;height:1px"></div>
<div class="a gl" style="left:243px;top:413px;width:600px;height:1px"></div>
<div class="a gl" style="left:243px;top:430px;width:600px;height:1px"></div>
<div class="a gl" style="left:243px;top:447px;width:600px;height:1px"></div>
<div class="a gl" style="left:243px;top:464px;width:600px;height:1px"></div>
<div class="a gl" style="left:243px;top:481px;width:600px;height:1px"></div>
<div class="a gl" style="left:243px;top:498px;width:600px;height:1px"></div>
<div class="a gl" style="left:243px;top:515px;width:600px;height:1px"></div>
<div class="a gl" style="left:243px;top:532px;width:600px;height:1px"></div>
<div class="a gl" style="left:243px;top:549px;width:600px;height:1px"></div>
<div class="a gl" style="left:243px;top:566px;width:600px;height:1px"></div>
<div class="a gl" style="left:243px;top:583px;width:600px;height:1px"></div>
<div class="a gl" style="left:243px;top:600px;width:600px;height:1px"></div>
<div class="a gl" style="left:243px;top:617px;width:600px;height:1px"></div>
<div class="a gl" style="left:243px;top:634px;width:600px;height:1px"></div>
<div class="a gl" style="left:243px;top:651px;width:600px;height:1px"></div>
<div class="clip" style="left:244px;top:345px;width:71px;height:17px"><span class="t" style="left:1.90px;top:-0.97px;font-size:13.2px;line-height:17px;letter-spacing:0.438px;color:#000;font-weight:bold;font-family:'DejaVu Sans','Liberation Sans',sans-serif;">Numéro</span></div>
<div class="clip" style="left:316px;top:345px;width:100px;height:17px"><span class="t" style="left:1.90px;top:-0.97px;font-size:13.2px;line-height:17px;letter-spacing:0.062px;color:#000;font-weight:bold;font-family:'DejaVu Sans','Liberation Sans',sans-serif;">Région</span></div>
<div class="clip" style="left:417px;top:345px;width:128px;height:17px"><span class="t" style="left:1.90px;top:-0.97px;font-size:13.2px;line-height:17px;letter-spacing:0.786px;color:#000;font-weight:bold;font-family:'DejaVu Sans','Liberation Sans',sans-serif;">Nom</span></div>
<div class="clip" style="left:546px;top:345px;width:85px;height:17px"><span class="t" style="left:1.90px;top:-0.97px;font-size:13.2px;line-height:17px;letter-spacing:0.012px;color:#000;font-weight:bold;font-family:'DejaVu Sans','Liberation Sans',sans-serif;">Robe</span></div>
<div class="clip" style="left:632px;top:345px;width:195px;height:17px"><span class="t" style="left:1.90px;top:-0.97px;font-size:13.2px;line-height:17px;letter-spacing:0.237px;color:#000;font-weight:bold;font-family:'DejaVu Sans','Liberation Sans',sans-serif;">Domaine</span></div>
<div class="clip" style="left:244px;top:362px;width:71px;height:17px"><span class="t" style="left:35.27px;top:-0.97px;font-size:13.2px;line-height:17px;letter-spacing:0.191px;color:#000;font-family:'DejaVu Sans','Liberation Sans',sans-serif;">1283</span></div>
<div class="clip" style="left:316px;top:362px;width:95px;height:17px"><span class="t" style="left:1.40px;top:-0.97px;font-size:13.2px;line-height:17px;letter-spacing:0.413px;color:#000;font-family:'DejaVu Sans','Liberation Sans',sans-serif;">France </span></div>
<div class="clip" style="left:316px;top:362px;width:95px;height:17px"><span class="t" style="left:52.34px;top:-2.12px;font-size:14.5px;line-height:19px;letter-spacing:-0.008px;color:#000;">&gt; </span></div>
<div class="clip" style="left:316px;top:362px;width:95px;height:17px"><span class="t" style="left:64.82px;top:-0.97px;font-size:13.2px;line-height:17px;letter-spacing:0.284px;color:#000;font-family:'DejaVu Sans','Liberation Sans',sans-serif;">Alsace</span></div>
<div class="clip" style="left:417px;top:362px;width:123px;height:17px"><span class="t" style="left:1.40px;top:-0.97px;font-size:13.2px;line-height:17px;letter-spacing:0.581px;color:#000;font-family:'DejaVu Sans','Liberation Sans',sans-serif;">Pinot </span></div>
<div class="clip" style="left:417px;top:362px;width:123px;height:17px"><span class="t" style="left:42.01px;top:-0.97px;font-size:13.2px;line-height:17px;letter-spacing:0.647px;color:#000;font-family:'DejaVu Sans','Liberation Sans',sans-serif;">Noir </span></div>
<div class="clip" style="left:417px;top:362px;width:123px;height:17px"><span class="t" style="left:76.46px;top:-0.97px;font-size:13.2px;line-height:17px;letter-spacing:0.714px;color:#000;font-family:'DejaVu Sans','Liberation Sans',sans-serif;"><u>Wolfberger</u></span></div>
<div class="clip" style="left:546px;top:362px;width:85px;height:17px"><span class="t" style="left:1.40px;top:-0.97px;font-size:13.2px;line-height:17px;letter-spacing:0.778px;color:#000;font-family:'DejaVu Sans','Liberation Sans',sans-serif;">Rouge</span></div>
<div class="clip" style="left:632px;top:362px;width:195px;height:17px"><span class="t" style="left:1.40px;top:-0.97px;font-size:13.2px;line-height:17px;letter-spacing:0.714px;color:#000;font-family:'DejaVu Sans','Liberation Sans',sans-serif;"><u>Wolfberger</u></span></div>
<div class="clip" style="left:244px;top:379px;width:71px;height:17px"><span class="t" style="left:43.85px;top:-0.97px;font-size:13.2px;line-height:17px;letter-spacing:0.193px;color:#000;font-family:'DejaVu Sans','Liberation Sans',sans-serif;">852</span></div>
<div class="clip" style="left:316px;top:379px;width:95px;height:17px"><span class="t" style="left:1.40px;top:-0.97px;font-size:13.2px;line-height:17px;letter-spacing:0.413px;color:#000;font-family:'DejaVu Sans','Liberation Sans',sans-serif;">France </span></div>
<div class="clip" style="left:316px;top:379px;width:95px;height:17px"><span class="t" style="left:52.34px;top:-2.12px;font-size:14.5px;line-height:19px;letter-spacing:-0.008px;color:#000;">&gt; </span></div>
<div class="clip" style="left:316px;top:379px;width:95px;height:17px"><span class="t" style="left:64.82px;top:-0.97px;font-size:13.2px;line-height:17px;letter-spacing:0.284px;color:#000;font-family:'DejaVu Sans','Liberation Sans',sans-serif;">Alsace</span></div>
<div class="clip" style="left:417px;top:379px;width:128px;height:17px"><span class="t" style="left:1.40px;top:-0.97px;font-size:13.2px;line-height:17px;letter-spacing:0.581px;color:#000;font-family:'DejaVu Sans','Liberation Sans',sans-serif;">Pinot </span></div>
<div class="clip" style="left:417px;top:379px;width:128px;height:17px"><span class="t" style="left:42.01px;top:-0.97px;font-size:13.2px;line-height:17px;letter-spacing:0.879px;color:#000;font-family:'DejaVu Sans','Liberation Sans',sans-serif;">Noir</span></div>
<div class="clip" style="left:546px;top:379px;width:85px;height:17px"><span class="t" style="left:1.40px;top:-0.97px;font-size:13.2px;line-height:17px;letter-spacing:0.778px;color:#000;font-family:'DejaVu Sans','Liberation Sans',sans-serif;">Rouge</span></div>
<div class="clip" style="left:632px;top:379px;width:195px;height:17px"><span class="t" style="left:1.40px;top:-0.97px;font-size:13.2px;line-height:17px;letter-spacing:0.714px;color:#000;font-family:'DejaVu Sans','Liberation Sans',sans-serif;"><u>Wolfberger</u></span></div>
<div class="clip" style="left:244px;top:396px;width:71px;height:17px"><span class="t" style="left:43.85px;top:-0.97px;font-size:13.2px;line-height:17px;letter-spacing:0.193px;color:#000;font-family:'DejaVu Sans','Liberation Sans',sans-serif;">136</span></div>
<div class="clip" style="left:316px;top:396px;width:95px;height:17px"><span class="t" style="left:1.40px;top:-0.97px;font-size:13.2px;line-height:17px;letter-spacing:0.413px;color:#000;font-family:'DejaVu Sans','Liberation Sans',sans-serif;">France </span></div>
<div class="clip" style="left:316px;top:396px;width:95px;height:17px"><span class="t" style="left:52.34px;top:-2.12px;font-size:14.5px;line-height:19px;letter-spacing:-0.008px;color:#000;">&gt; </span></div>
<div class="clip" style="left:316px;top:396px;width:95px;height:17px"><span class="t" style="left:64.82px;top:-0.97px;font-size:13.2px;line-height:17px;letter-spacing:0.284px;color:#000;font-family:'DejaVu Sans','Liberation Sans',sans-serif;">Alsace</span></div>
<div class="clip" style="left:417px;top:396px;width:123px;height:17px"><span class="t" style="left:1.40px;top:-0.97px;font-size:13.2px;line-height:17px;letter-spacing:0.581px;color:#000;font-family:'DejaVu Sans','Liberation Sans',sans-serif;">Pinot </span></div>
<div class="clip" style="left:417px;top:396px;width:123px;height:17px"><span class="t" style="left:42.01px;top:-0.97px;font-size:13.2px;line-height:17px;letter-spacing:0.647px;color:#000;font-family:'DejaVu Sans','Liberation Sans',sans-serif;">Noir </span></div>
<div class="clip" style="left:417px;top:396px;width:123px;height:17px"><span class="t" style="left:76.46px;top:-0.97px;font-size:13.2px;line-height:17px;letter-spacing:0.520px;color:#000;font-family:'DejaVu Sans','Liberation Sans',sans-serif;">"Rouge </span></div>
<div class="clip" style="left:546px;top:396px;width:85px;height:17px"><span class="t" style="left:1.40px;top:-0.97px;font-size:13.2px;line-height:17px;letter-spacing:0.778px;color:#000;font-family:'DejaVu Sans','Liberation Sans',sans-serif;">Rouge</span></div>
<div class="clip" style="left:632px;top:396px;width:195px;height:17px"><span class="t" style="left:1.40px;top:-0.97px;font-size:13.2px;line-height:17px;letter-spacing:0.115px;color:#000;font-family:'DejaVu Sans','Liberation Sans',sans-serif;"><u>Seilly</u></span></div>
<div class="clip" style="left:244px;top:413px;width:71px;height:17px"><span class="t" style="left:35.27px;top:-0.97px;font-size:13.2px;line-height:17px;letter-spacing:0.191px;color:#000;font-family:'DejaVu Sans','Liberation Sans',sans-serif;">2640</span></div>
<div class="clip" style="left:316px;top:413px;width:95px;height:17px"><span class="t" style="left:1.40px;top:-0.97px;font-size:13.2px;line-height:17px;letter-spacing:0.413px;color:#000;font-family:'DejaVu Sans','Liberation Sans',sans-serif;">France </span></div>
<div class="clip" style="left:316px;top:413px;width:95px;height:17px"><span class="t" style="left:52.34px;top:-2.12px;font-size:14.5px;line-height:19px;letter-spacing:-0.008px;color:#000;">&gt; </span></div>
<div class="clip" style="left:316px;top:413px;width:95px;height:17px"><span class="t" style="left:64.82px;top:-0.97px;font-size:13.2px;line-height:17px;letter-spacing:0.284px;color:#000;font-family:'DejaVu Sans','Liberation Sans',sans-serif;">Alsace</span></div>
<div class="clip" style="left:417px;top:413px;width:123px;height:17px"><span class="t" style="left:1.40px;top:-0.97px;font-size:13.2px;line-height:17px;letter-spacing:0.581px;color:#000;font-family:'DejaVu Sans','Liberation Sans',sans-serif;">Pinot </span></div>
<div class="clip" style="left:417px;top:413px;width:123px;height:17px"><span class="t" style="left:42.01px;top:-0.97px;font-size:13.2px;line-height:17px;letter-spacing:0.341px;color:#000;font-family:'DejaVu Sans','Liberation Sans',sans-serif;">Gris </span></div>
<div class="clip" style="left:417px;top:413px;width:123px;height:17px"><span class="t" style="left:74.09px;top:-0.97px;font-size:13.2px;line-height:17px;letter-spacing:0.530px;color:#000;font-family:'DejaVu Sans','Liberation Sans',sans-serif;">Vendanges </span></div>
<div class="clip" style="left:546px;top:413px;width:85px;height:17px"><span class="t" style="left:1.40px;top:-0.97px;font-size:13.2px;line-height:17px;letter-spacing:0.422px;color:#000;font-family:'DejaVu Sans','Liberation Sans',sans-serif;">Blanc</span></div>
<div class="clip" style="left:632px;top:413px;width:195px;height:17px"><span class="t" style="left:1.40px;top:-0.97px;font-size:13.2px;line-height:17px;letter-spacing:0.587px;color:#000;font-family:'DejaVu Sans','Liberation Sans',sans-serif;"><u>Schlumberger</u></span></div>
<div class="clip" style="left:244px;top:430px;width:71px;height:17px"><span class="t" style="left:26.69px;top:-0.97px;font-size:13.2px;line-height:17px;letter-spacing:0.191px;color:#000;font-family:'DejaVu Sans','Liberation Sans',sans-serif;">50429</span></div>
<div class="clip" style="left:316px;top:430px;width:95px;height:17px"><span class="t" style="left:1.40px;top:-0.97px;font-size:13.2px;line-height:17px;letter-spacing:0.413px;color:#000;font-family:'DejaVu Sans','Liberation Sans',sans-serif;">France </span></div>
<div class="clip" style="left:316px;top:430px;width:95px;height:17px"><span class="t" style="left:52.34px;top:-2.12px;font-size:14.5px;line-height:19px;letter-spacing:-0.008px;color:#000;">&gt; </span></div>
<div class="clip" style="left:316px;top:430px;width:95px;height:17px"><span class="t" style="left:64.82px;top:-0.97px;font-size:13.2px;line-height:17px;letter-spacing:0.284px;color:#000;font-family:'DejaVu Sans','Liberation Sans',sans-serif;">Alsace</span></div>
<div class="clip" style="left:417px;top:430px;width:123px;height:17px"><span class="t" style="left:1.40px;top:-0.97px;font-size:13.2px;line-height:17px;letter-spacing:0.581px;color:#000;font-family:'DejaVu Sans','Liberation Sans',sans-serif;">Pinot </span></div>
<div class="clip" style="left:417px;top:430px;width:123px;height:17px"><span class="t" style="left:42.01px;top:-0.97px;font-size:13.2px;line-height:17px;letter-spacing:0.341px;color:#000;font-family:'DejaVu Sans','Liberation Sans',sans-serif;">Gris </span></div>
<div class="clip" style="left:417px;top:430px;width:123px;height:17px"><span class="t" style="left:74.09px;top:-0.97px;font-size:13.2px;line-height:17px;letter-spacing:0.530px;color:#000;font-family:'DejaVu Sans','Liberation Sans',sans-serif;">Vendanges </span></div>
<div class="clip" style="left:546px;top:430px;width:85px;height:17px"><span class="t" style="left:1.40px;top:-0.97px;font-size:13.2px;line-height:17px;letter-spacing:0.422px;color:#000;font-family:'DejaVu Sans','Liberation Sans',sans-serif;">Blanc</span></div>
<div class="clip" style="left:632px;top:430px;width:195px;height:17px"><span class="t" style="left:1.40px;top:-0.97px;font-size:13.2px;line-height:17px;letter-spacing:0.439px;color:#000;font-family:'DejaVu Sans','Liberation Sans',sans-serif;">Domaine A. </span></div>
<div class="clip" style="left:632px;top:430px;width:195px;height:17px"><span class="t" style="left:86.88px;top:-0.97px;font-size:13.2px;line-height:17px;letter-spacing:0.531px;color:#000;font-family:'DejaVu Sans','Liberation Sans',sans-serif;">Zimmermann &amp; </span></div>
<div class="clip" style="left:244px;top:447px;width:71px;height:17px"><span class="t" style="left:26.69px;top:-0.97px;font-size:13.2px;line-height:17px;letter-spacing:0.191px;color:#000;font-family:'DejaVu Sans','Liberation Sans',sans-serif;">31726</span></div>
<div class="clip" style="left:316px;top:447px;width:95px;height:17px"><span class="t" style="left:1.40px;top:-0.97px;font-size:13.2px;line-height:17px;letter-spacing:0.413px;color:#000;font-family:'DejaVu Sans','Liberation Sans',sans-serif;">France </span></div>
<div class="clip" style="left:316px;top:447px;width:95px;height:17px"><span class="t" style="left:52.34px;top:-2.12px;font-size:14.5px;line-height:19px;letter-spacing:-0.008px;color:#000;">&gt; </span></div>
<div class="clip" style="left:316px;top:447px;width:95px;height:17px"><span class="t" style="left:64.82px;top:-0.97px;font-size:13.2px;line-height:17px;letter-spacing:0.284px;color:#000;font-family:'DejaVu Sans','Liberation Sans',sans-serif;">Alsace</span></div>
<div class="clip" style="left:417px;top:447px;width:128px;height:17px"><span class="t" style="left:1.40px;top:-0.97px;font-size:13.2px;line-height:17px;letter-spacing:0.581px;color:#000;font-family:'DejaVu Sans','Liberation Sans',sans-serif;">Pinot </span></div>
<div class="clip" style="left:417px;top:447px;width:128px;height:17px"><span class="t" style="left:42.01px;top:-0.97px;font-size:13.2px;line-height:17px;letter-spacing:0.496px;color:#000;font-family:'DejaVu Sans','Liberation Sans',sans-serif;">Gris</span></div>
<div class="clip" style="left:546px;top:447px;width:85px;height:17px"><span class="t" style="left:1.40px;top:-0.97px;font-size:13.2px;line-height:17px;letter-spacing:0.422px;color:#000;font-family:'DejaVu Sans','Liberation Sans',sans-serif;">Blanc</span></div>
<div class="clip" style="left:632px;top:447px;width:195px;height:17px"><span class="t" style="left:1.40px;top:-0.97px;font-size:13.2px;line-height:17px;letter-spacing:0.411px;color:#000;font-family:'DejaVu Sans','Liberation Sans',sans-serif;"><u>Blanck</u></span></div>
<div class="clip" style="left:244px;top:464px;width:71px;height:17px"><span class="t" style="left:26.69px;top:-0.97px;font-size:13.2px;line-height:17px;letter-spacing:0.191px;color:#000;font-family:'DejaVu Sans','Liberation Sans',sans-serif;">31728</span></div>
<div class="clip" style="left:316px;top:464px;width:95px;height:17px"><span class="t" style="left:1.40px;top:-0.97px;font-size:13.2px;line-height:17px;letter-spacing:0.413px;color:#000;font-family:'DejaVu Sans','Liberation Sans',sans-serif;">France </span></div>
<div class="clip" style="left:316px;top:464px;width:95px;height:17px"><span class="t" style="left:52.34px;top:-2.12px;font-size:14.5px;line-height:19px;letter-spacing:-0.008px;color:#000;">&gt; </span></div>
<div class="clip" style="left:316px;top:464px;width:95px;height:17px"><span class="t" style="left:64.82px;top:-0.97px;font-size:13.2px;line-height:17px;letter-spacing:0.284px;color:#000;font-family:'DejaVu Sans','Liberation Sans',sans-serif;">Alsace</span></div>
<div class="clip" style="left:417px;top:464px;width:123px;height:17px"><span class="t" style="left:1.40px;top:-0.97px;font-size:13.2px;line-height:17px;letter-spacing:0.581px;color:#000;font-family:'DejaVu Sans','Liberation Sans',sans-serif;">Pinot </span></div>
<div class="clip" style="left:417px;top:464px;width:123px;height:17px"><span class="t" style="left:42.01px;top:-0.97px;font-size:13.2px;line-height:17px;letter-spacing:0.341px;color:#000;font-family:'DejaVu Sans','Liberation Sans',sans-serif;">Gris </span></div>
<div class="clip" style="left:417px;top:464px;width:123px;height:17px"><span class="t" style="left:74.09px;top:-0.97px;font-size:13.2px;line-height:17px;letter-spacing:0.306px;color:#000;font-family:'DejaVu Sans','Liberation Sans',sans-serif;">lieu-dit </span></div>
<div class="clip" style="left:546px;top:464px;width:85px;height:17px"><span class="t" style="left:1.40px;top:-0.97px;font-size:13.2px;line-height:17px;letter-spacing:0.422px;color:#000;font-family:'DejaVu Sans','Liberation Sans',sans-serif;">Blanc</span></div>
<div class="clip" style="left:632px;top:464px;width:195px;height:17px"><span class="t" style="left:1.40px;top:-0.97px;font-size:13.2px;line-height:17px;letter-spacing:0.411px;color:#000;font-family:'DejaVu Sans','Liberation Sans',sans-serif;"><u>Blanck</u></span></div>
<div class="clip" style="left:244px;top:481px;width:71px;height:17px"><span class="t" style="left:26.69px;top:-0.97px;font-size:13.2px;line-height:17px;letter-spacing:0.191px;color:#000;font-family:'DejaVu Sans','Liberation Sans',sans-serif;">19059</span></div>
<div class="clip" style="left:316px;top:481px;width:95px;height:17px"><span class="t" style="left:1.40px;top:-0.97px;font-size:13.2px;line-height:17px;letter-spacing:0.413px;color:#000;font-family:'DejaVu Sans','Liberation Sans',sans-serif;">France </span></div>
<div class="clip" style="left:316px;top:481px;width:95px;height:17px"><span class="t" style="left:52.34px;top:-2.12px;font-size:14.5px;line-height:19px;letter-spacing:-0.008px;color:#000;">&gt; </span></div>
<div class="clip" style="left:316px;top:481px;width:95px;height:17px"><span class="t" style="left:64.82px;top:-0.97px;font-size:13.2px;line-height:17px;letter-spacing:0.284px;color:#000;font-family:'DejaVu Sans','Liberation Sans',sans-serif;">Alsace</span></div>
<div class="clip" style="left:417px;top:481px;width:123px;height:17px"><span class="t" style="left:1.40px;top:-0.97px;font-size:13.2px;line-height:17px;letter-spacing:0.517px;color:#000;font-family:'DejaVu Sans','Liberation Sans',sans-serif;"><u>Gewurztramnier</u> </span></div>
<div class="clip" style="left:417px;top:481px;width:123px;height:17px"><span class="t" style="left:120.24px;top:-0.97px;font-size:13.2px;line-height:17px;letter-spacing:0.530px;color:#000;font-family:'DejaVu Sans','Liberation Sans',sans-serif;">Vendanges </span></div>
<div class="clip" style="left:546px;top:481px;width:85px;height:17px"><span class="t" style="left:1.40px;top:-0.97px;font-size:13.2px;line-height:17px;letter-spacing:0.422px;color:#000;font-family:'DejaVu Sans','Liberation Sans',sans-serif;">Blanc</span></div>
<div class="clip" style="left:632px;top:481px;width:195px;height:17px"><span class="t" style="left:1.40px;top:-0.97px;font-size:13.2px;line-height:17px;letter-spacing:0.741px;color:#000;font-family:'DejaVu Sans','Liberation Sans',sans-serif;"><u>Kirmann</u></span></div>
<div class="clip" style="left:244px;top:498px;width:71px;height:17px"><span class="t" style="left:26.69px;top:-0.97px;font-size:13.2px;line-height:17px;letter-spacing:0.191px;color:#000;font-family:'DejaVu Sans','Liberation Sans',sans-serif;">31729</span></div>
<div class="clip" style="left:316px;top:498px;width:95px;height:17px"><span class="t" style="left:1.40px;top:-0.97px;font-size:13.2px;line-height:17px;letter-spacing:0.413px;color:#000;font-family:'DejaVu Sans','Liberation Sans',sans-serif;">France </span></div>
<div class="clip" style="left:316px;top:498px;width:95px;height:17px"><span class="t" style="left:52.34px;top:-2.12px;font-size:14.5px;line-height:19px;letter-spacing:-0.008px;color:#000;">&gt; </span></div>
<div class="clip" style="left:316px;top:498px;width:95px;height:17px"><span class="t" style="left:64.82px;top:-0.97px;font-size:13.2px;line-height:17px;letter-spacing:0.284px;color:#000;font-family:'DejaVu Sans','Liberation Sans',sans-serif;">Alsace</span></div>
<div class="clip" style="left:417px;top:498px;width:123px;height:17px"><span class="t" style="left:1.40px;top:-0.97px;font-size:13.2px;line-height:17px;letter-spacing:0.517px;color:#000;font-family:'DejaVu Sans','Liberation Sans',sans-serif;">Gewurztraminer </span></div>
<div class="clip" style="left:417px;top:498px;width:123px;height:17px"><span class="t" style="left:120.24px;top:-0.97px;font-size:13.2px;line-height:17px;letter-spacing:0.497px;color:#000;font-family:'DejaVu Sans','Liberation Sans',sans-serif;">Grand </span></div>
<div class="clip" style="left:546px;top:498px;width:85px;height:17px"><span class="t" style="left:1.40px;top:-0.97px;font-size:13.2px;line-height:17px;letter-spacing:0.422px;color:#000;font-family:'DejaVu Sans','Liberation Sans',sans-serif;">Blanc</span></div>
<div class="clip" style="left:632px;top:498px;width:195px;height:17px"><span class="t" style="left:1.40px;top:-0.97px;font-size:13.2px;line-height:17px;letter-spacing:0.446px;color:#000;font-family:'DejaVu Sans','Liberation Sans',sans-serif;"><u>Stoeffler</u></span></div>
<div class="clip" style="left:244px;top:515px;width:71px;height:17px"><span class="t" style="left:26.69px;top:-0.97px;font-size:13.2px;line-height:17px;letter-spacing:0.191px;color:#000;font-family:'DejaVu Sans','Liberation Sans',sans-serif;">38633</span></div>
<div class="clip" style="left:316px;top:515px;width:95px;height:17px"><span class="t" style="left:1.40px;top:-0.97px;font-size:13.2px;line-height:17px;letter-spacing:0.413px;color:#000;font-family:'DejaVu Sans','Liberation Sans',sans-serif;">France </span></div>
<div class="clip" style="left:316px;top:515px;width:95px;height:17px"><span class="t" style="left:52.34px;top:-2.12px;font-size:14.5px;line-height:19px;letter-spacing:-0.008px;color:#000;">&gt; </span></div>
<div class="clip" style="left:316px;top:515px;width:95px;height:17px"><span class="t" style="left:64.82px;top:-0.97px;font-size:13.2px;line-height:17px;letter-spacing:0.284px;color:#000;font-family:'DejaVu Sans','Liberation Sans',sans-serif;">Alsace</span></div>
<div class="clip" style="left:417px;top:515px;width:123px;height:17px"><span class="t" style="left:1.40px;top:-0.97px;font-size:13.2px;line-height:17px;letter-spacing:0.517px;color:#000;font-family:'DejaVu Sans','Liberation Sans',sans-serif;">Gewurztraminer </span></div>
<div class="clip" style="left:417px;top:515px;width:123px;height:17px"><span class="t" style="left:120.24px;top:-0.97px;font-size:13.2px;line-height:17px;letter-spacing:0.497px;color:#000;font-family:'DejaVu Sans','Liberation Sans',sans-serif;">Grand </span></div>
<div class="clip" style="left:546px;top:515px;width:80px;height:17px"><span class="t" style="left:1.40px;top:-0.97px;font-size:13.2px;line-height:17px;letter-spacing:0.302px;color:#000;font-family:'DejaVu Sans','Liberation Sans',sans-serif;">Blanc </span></div>
<div class="clip" style="left:546px;top:515px;width:80px;height:17px"><span class="t" style="left:43.81px;top:-0.97px;font-size:13.2px;line-height:17px;letter-spacing:0.628px;color:#000;font-family:'DejaVu Sans','Liberation Sans',sans-serif;">Liquoreux</span></div>
<div class="clip" style="left:632px;top:515px;width:195px;height:17px"><span class="t" style="left:1.40px;top:-0.97px;font-size:13.2px;line-height:17px;letter-spacing:0.431px;color:#000;font-family:'DejaVu Sans','Liberation Sans',sans-serif;"><u>Becht</u></span></div>
<div class="clip" style="left:244px;top:532px;width:71px;height:17px"><span class="t" style="left:26.69px;top:-0.97px;font-size:13.2px;line-height:17px;letter-spacing:0.191px;color:#000;font-family:'DejaVu Sans','Liberation Sans',sans-serif;">86086</span></div>
<div class="clip" style="left:316px;top:532px;width:95px;height:17px"><span class="t" style="left:1.40px;top:-0.97px;font-size:13.2px;line-height:17px;letter-spacing:0.413px;color:#000;font-family:'DejaVu Sans','Liberation Sans',sans-serif;">France </span></div>
<div class="clip" style="left:316px;top:532px;width:95px;height:17px"><span class="t" style="left:52.34px;top:-2.12px;font-size:14.5px;line-height:19px;letter-spacing:-0.008px;color:#000;">&gt; </span></div>
<div class="clip" style="left:316px;top:532px;width:95px;height:17px"><span class="t" style="left:64.82px;top:-0.97px;font-size:13.2px;line-height:17px;letter-spacing:0.623px;color:#000;font-family:'DejaVu Sans','Liberation Sans',sans-serif;">Bordeaux</span></div>
<div class="clip" style="left:417px;top:532px;width:128px;height:17px"><span class="t" style="left:1.40px;top:-0.97px;font-size:13.2px;line-height:17px;letter-spacing:0.413px;color:#000;font-family:'DejaVu Sans','Liberation Sans',sans-serif;">Château du </span></div>
<div class="clip" style="left:417px;top:532px;width:128px;height:17px"><span class="t" style="left:86.43px;top:-0.97px;font-size:13.2px;line-height:17px;letter-spacing:0.534px;color:#000;font-family:'DejaVu Sans','Liberation Sans',sans-serif;">Barry</span></div>
<div class="clip" style="left:546px;top:532px;width:85px;height:17px"><span class="t" style="left:1.40px;top:-0.97px;font-size:13.2px;line-height:17px;letter-spacing:0.778px;color:#000;font-family:'DejaVu Sans','Liberation Sans',sans-serif;">Rouge</span></div>
<div class="clip" style="left:632px;top:532px;width:195px;height:17px"><span class="t" style="left:1.40px;top:-0.97px;font-size:13.2px;line-height:17px;letter-spacing:0.359px;color:#000;font-family:'DejaVu Sans','Liberation Sans',sans-serif;">Daniel </span></div>
<div class="clip" style="left:632px;top:532px;width:195px;height:17px"><span class="t" style="left:50.15px;top:-0.97px;font-size:13.2px;line-height:17px;letter-spacing:0.847px;color:#000;font-family:'DejaVu Sans','Liberation Sans',sans-serif;"><u>Mouty</u></span></div>
<div class="clip" style="left:244px;top:549px;width:71px;height:17px"><span class="t" style="left:26.69px;top:-0.97px;font-size:13.2px;line-height:17px;letter-spacing:0.191px;color:#000;font-family:'DejaVu Sans','Liberation Sans',sans-serif;">31732</span></div>
<div class="clip" style="left:316px;top:549px;width:95px;height:17px"><span class="t" style="left:1.40px;top:-0.97px;font-size:13.2px;line-height:17px;letter-spacing:0.413px;color:#000;font-family:'DejaVu Sans','Liberation Sans',sans-serif;">France </span></div>
<div class="clip" style="left:316px;top:549px;width:95px;height:17px"><span class="t" style="left:52.34px;top:-2.12px;font-size:14.5px;line-height:19px;letter-spacing:-0.008px;color:#000;">&gt; </span></div>
<div class="clip" style="left:316px;top:549px;width:95px;height:17px"><span class="t" style="left:64.82px;top:-0.97px;font-size:13.2px;line-height:17px;letter-spacing:0.284px;color:#000;font-family:'DejaVu Sans','Liberation Sans',sans-serif;">Alsace</span></div>
<div class="clip" style="left:417px;top:549px;width:123px;height:17px"><span class="t" style="left:1.40px;top:-0.97px;font-size:13.2px;line-height:17px;letter-spacing:0.325px;color:#000;font-family:'DejaVu Sans','Liberation Sans',sans-serif;">Riesling </span></div>
<div class="clip" style="left:417px;top:549px;width:123px;height:17px"><span class="t" style="left:60.38px;top:-0.97px;font-size:13.2px;line-height:17px;letter-spacing:0.497px;color:#000;font-family:'DejaVu Sans','Liberation Sans',sans-serif;">Grand </span></div>
<div class="clip" style="left:417px;top:549px;width:123px;height:17px"><span class="t" style="left:108.02px;top:-0.97px;font-size:13.2px;line-height:17px;letter-spacing:0.418px;color:#000;font-family:'DejaVu Sans','Liberation Sans',sans-serif;">Cru </span></div>
<div class="clip" style="left:546px;top:549px;width:85px;height:17px"><span class="t" style="left:1.40px;top:-0.97px;font-size:13.2px;line-height:17px;letter-spacing:0.422px;color:#000;font-family:'DejaVu Sans','Liberation Sans',sans-serif;">Blanc</span></div>
<div class="clip" style="left:632px;top:549px;width:195px;height:17px"><span class="t" style="left:1.40px;top:-0.97px;font-size:13.2px;line-height:17px;letter-spacing:0.446px;color:#000;font-family:'DejaVu Sans','Liberation Sans',sans-serif;"><u>Stoeffler</u></span></div>
<div class="clip" style="left:244px;top:566px;width:71px;height:17px"><span class="t" style="left:26.69px;top:-0.97px;font-size:13.2px;line-height:17px;letter-spacing:0.191px;color:#000;font-family:'DejaVu Sans','Liberation Sans',sans-serif;">19055</span></div>
<div class="clip" style="left:316px;top:566px;width:95px;height:17px"><span class="t" style="left:1.40px;top:-0.97px;font-size:13.2px;line-height:17px;letter-spacing:0.413px;color:#000;font-family:'DejaVu Sans','Liberation Sans',sans-serif;">France </span></div>
<div class="clip" style="left:316px;top:566px;width:95px;height:17px"><span class="t" style="left:52.34px;top:-2.12px;font-size:14.5px;line-height:19px;letter-spacing:-0.008px;color:#000;">&gt; </span></div>
<div class="clip" style="left:316px;top:566px;width:95px;height:17px"><span class="t" style="left:64.82px;top:-0.97px;font-size:13.2px;line-height:17px;letter-spacing:0.623px;color:#000;font-family:'DejaVu Sans','Liberation Sans',sans-serif;">Bordeaux</span></div>
<div class="clip" style="left:417px;top:566px;width:128px;height:17px"><span class="t" style="left:1.40px;top:-0.97px;font-size:13.2px;line-height:17px;letter-spacing:0.413px;color:#000;font-family:'DejaVu Sans','Liberation Sans',sans-serif;">Château du </span></div>
<div class="clip" style="left:417px;top:566px;width:128px;height:17px"><span class="t" style="left:86.43px;top:-0.97px;font-size:13.2px;line-height:17px;letter-spacing:0.534px;color:#000;font-family:'DejaVu Sans','Liberation Sans',sans-serif;">Barry</span></div>
<div class="clip" style="left:546px;top:566px;width:85px;height:17px"><span class="t" style="left:1.40px;top:-0.97px;font-size:13.2px;line-height:17px;letter-spacing:0.778px;color:#000;font-family:'DejaVu Sans','Liberation Sans',sans-serif;">Rouge</span></div>
<div class="clip" style="left:632px;top:566px;width:195px;height:17px"><span class="t" style="left:1.40px;top:-0.97px;font-size:13.2px;line-height:17px;letter-spacing:0.359px;color:#000;font-family:'DejaVu Sans','Liberation Sans',sans-serif;">Daniel </span></div>
<div class="clip" style="left:632px;top:566px;width:195px;height:17px"><span class="t" style="left:50.15px;top:-0.97px;font-size:13.2px;line-height:17px;letter-spacing:0.847px;color:#000;font-family:'DejaVu Sans','Liberation Sans',sans-serif;"><u>Mouty</u></span></div>
<div class="clip" style="left:244px;top:583px;width:71px;height:17px"><span class="t" style="left:26.69px;top:-0.97px;font-size:13.2px;line-height:17px;letter-spacing:0.191px;color:#000;font-family:'DejaVu Sans','Liberation Sans',sans-serif;">15038</span></div>
<div class="clip" style="left:316px;top:583px;width:95px;height:17px"><span class="t" style="left:1.40px;top:-0.97px;font-size:13.2px;line-height:17px;letter-spacing:0.413px;color:#000;font-family:'DejaVu Sans','Liberation Sans',sans-serif;">France </span></div>
<div class="clip" style="left:316px;top:583px;width:95px;height:17px"><span class="t" style="left:52.34px;top:-2.12px;font-size:14.5px;line-height:19px;letter-spacing:-0.008px;color:#000;">&gt; </span></div>
<div class="clip" style="left:316px;top:583px;width:95px;height:17px"><span class="t" style="left:64.82px;top:-0.97px;font-size:13.2px;line-height:17px;letter-spacing:0.623px;color:#000;font-family:'DejaVu Sans','Liberation Sans',sans-serif;">Bordeaux</span></div>
<div class="clip" style="left:417px;top:583px;width:128px;height:17px"><span class="t" style="left:1.40px;top:-0.97px;font-size:13.2px;line-height:17px;letter-spacing:0.413px;color:#000;font-family:'DejaVu Sans','Liberation Sans',sans-serif;">Château du </span></div>
<div class="clip" style="left:417px;top:583px;width:128px;height:17px"><span class="t" style="left:86.43px;top:-0.97px;font-size:13.2px;line-height:17px;letter-spacing:0.534px;color:#000;font-family:'DejaVu Sans','Liberation Sans',sans-serif;">Barry</span></div>
<div class="clip" style="left:546px;top:583px;width:85px;height:17px"><span class="t" style="left:1.40px;top:-0.97px;font-size:13.2px;line-height:17px;letter-spacing:0.778px;color:#000;font-family:'DejaVu Sans','Liberation Sans',sans-serif;">Rouge</span></div>
<div class="clip" style="left:632px;top:583px;width:195px;height:17px"><span class="t" style="left:1.40px;top:-0.97px;font-size:13.2px;line-height:17px;letter-spacing:0.359px;color:#000;font-family:'DejaVu Sans','Liberation Sans',sans-serif;">Daniel </span></div>
<div class="clip" style="left:632px;top:583px;width:195px;height:17px"><span class="t" style="left:50.15px;top:-0.97px;font-size:13.2px;line-height:17px;letter-spacing:0.847px;color:#000;font-family:'DejaVu Sans','Liberation Sans',sans-serif;"><u>Mouty</u></span></div>
<div class="clip" style="left:244px;top:600px;width:71px;height:17px"><span class="t" style="left:26.69px;top:-0.97px;font-size:13.2px;line-height:17px;letter-spacing:0.191px;color:#000;font-family:'DejaVu Sans','Liberation Sans',sans-serif;">78551</span></div>
<div class="clip" style="left:316px;top:600px;width:95px;height:17px"><span class="t" style="left:1.40px;top:-0.97px;font-size:13.2px;line-height:17px;letter-spacing:0.413px;color:#000;font-family:'DejaVu Sans','Liberation Sans',sans-serif;">France </span></div>
<div class="clip" style="left:316px;top:600px;width:95px;height:17px"><span class="t" style="left:52.34px;top:-2.12px;font-size:14.5px;line-height:19px;letter-spacing:-0.008px;color:#000;">&gt; </span></div>
<div class="clip" style="left:316px;top:600px;width:95px;height:17px"><span class="t" style="left:64.82px;top:-0.97px;font-size:13.2px;line-height:17px;letter-spacing:0.527px;color:#000;font-family:'DejaVu Sans','Liberation Sans',sans-serif;">Ardèche</span></div>
<div class="clip" style="left:417px;top:600px;width:128px;height:17px"><span class="t" style="left:1.40px;top:-0.97px;font-size:13.2px;line-height:17px;letter-spacing:0.570px;color:#000;font-family:'DejaVu Sans','Liberation Sans',sans-serif;">Viognier</span></div>
<div class="clip" style="left:546px;top:600px;width:85px;height:17px"><span class="t" style="left:1.40px;top:-0.97px;font-size:13.2px;line-height:17px;letter-spacing:0.422px;color:#000;font-family:'DejaVu Sans','Liberation Sans',sans-serif;">Blanc</span></div>
<div class="clip" style="left:632px;top:600px;width:195px;height:17px"><span class="t" style="left:1.40px;top:-0.97px;font-size:13.2px;line-height:17px;letter-spacing:0.482px;color:#000;font-family:'DejaVu Sans','Liberation Sans',sans-serif;">Louis </span></div>
<div class="clip" style="left:632px;top:600px;width:195px;height:17px"><span class="t" style="left:42.57px;top:-0.97px;font-size:13.2px;line-height:17px;letter-spacing:0.630px;color:#000;font-family:'DejaVu Sans','Liberation Sans',sans-serif;"><u>Latour</u></span></div>
<div class="clip" style="left:244px;top:617px;width:71px;height:17px"><span class="t" style="left:35.27px;top:-0.97px;font-size:13.2px;line-height:17px;letter-spacing:0.191px;color:#000;font-family:'DejaVu Sans','Liberation Sans',sans-serif;">2191</span></div>
<div class="clip" style="left:316px;top:617px;width:95px;height:17px"><span class="t" style="left:1.40px;top:-0.97px;font-size:13.2px;line-height:17px;letter-spacing:0.413px;color:#000;font-family:'DejaVu Sans','Liberation Sans',sans-serif;">France </span></div>
<div class="clip" style="left:316px;top:617px;width:95px;height:17px"><span class="t" style="left:52.34px;top:-2.12px;font-size:14.5px;line-height:19px;letter-spacing:-0.008px;color:#000;">&gt; </span></div>
<div class="clip" style="left:316px;top:617px;width:95px;height:17px"><span class="t" style="left:64.82px;top:-0.97px;font-size:13.2px;line-height:17px;letter-spacing:0.623px;color:#000;font-family:'DejaVu Sans','Liberation Sans',sans-serif;">Bordeaux</span></div>
<div class="clip" style="left:417px;top:617px;width:123px;height:17px"><span class="t" style="left:1.40px;top:-0.97px;font-size:13.2px;line-height:17px;letter-spacing:0.383px;color:#000;font-family:'DejaVu Sans','Liberation Sans',sans-serif;">Château </span></div>
<div class="clip" style="left:417px;top:617px;width:123px;height:17px"><span class="t" style="left:64.04px;top:-0.97px;font-size:13.2px;line-height:17px;letter-spacing:0.315px;color:#000;font-family:'DejaVu Sans','Liberation Sans',sans-serif;">Chasse </span></div>
<div class="clip" style="left:417px;top:617px;width:123px;height:17px"><span class="t" style="left:117.95px;top:-0.97px;font-size:13.2px;line-height:17px;letter-spacing:0.422px;color:#000;font-family:'DejaVu Sans','Liberation Sans',sans-serif;">Spleen</span></div>
<div class="clip" style="left:546px;top:617px;width:85px;height:17px"><span class="t" style="left:1.40px;top:-0.97px;font-size:13.2px;line-height:17px;letter-spacing:0.609px;color:#000;font-family:'DejaVu Sans','Liberation Sans',sans-serif;">Rosé</span></div>
<div class="clip" style="left:632px;top:617px;width:195px;height:17px"><span class="t" style="left:1.40px;top:-0.97px;font-size:13.2px;line-height:17px;letter-spacing:0.383px;color:#000;font-family:'DejaVu Sans','Liberation Sans',sans-serif;">Château </span></div>
<div class="clip" style="left:632px;top:617px;width:195px;height:17px"><span class="t" style="left:64.04px;top:-0.97px;font-size:13.2px;line-height:17px;letter-spacing:0.315px;color:#000;font-family:'DejaVu Sans','Liberation Sans',sans-serif;">Chasse </span></div>
<div class="clip" style="left:632px;top:617px;width:195px;height:17px"><span class="t" style="left:117.95px;top:-0.97px;font-size:13.2px;line-height:17px;letter-spacing:0.422px;color:#000;font-family:'DejaVu Sans','Liberation Sans',sans-serif;">Spleen</span></div>
<div class="clip" style="left:244px;top:634px;width:71px;height:17px"><span class="t" style="left:26.69px;top:-0.97px;font-size:13.2px;line-height:17px;letter-spacing:0.191px;color:#000;font-family:'DejaVu Sans','Liberation Sans',sans-serif;">86786</span></div>
<div class="clip" style="left:316px;top:634px;width:95px;height:17px"><span class="t" style="left:1.40px;top:-0.97px;font-size:13.2px;line-height:17px;letter-spacing:0.413px;color:#000;font-family:'DejaVu Sans','Liberation Sans',sans-serif;">France </span></div>
<div class="clip" style="left:316px;top:634px;width:95px;height:17px"><span class="t" style="left:52.34px;top:-2.12px;font-size:14.5px;line-height:19px;letter-spacing:-0.008px;color:#000;">&gt; </span></div>
<div class="clip" style="left:316px;top:634px;width:95px;height:17px"><span class="t" style="left:64.82px;top:-0.97px;font-size:13.2px;line-height:17px;letter-spacing:0.623px;color:#000;font-family:'DejaVu Sans','Liberation Sans',sans-serif;">Bordeaux</span></div>
<div class="clip" style="left:417px;top:634px;width:123px;height:17px"><span class="t" style="left:1.40px;top:-0.97px;font-size:13.2px;line-height:17px;letter-spacing:0.361px;color:#000;font-family:'DejaVu Sans','Liberation Sans',sans-serif;">Chateau de </span></div>
<div class="clip" style="left:417px;top:634px;width:123px;height:17px"><span class="t" style="left:85.62px;top:-0.97px;font-size:13.2px;line-height:17px;letter-spacing:0.482px;color:#000;font-family:'DejaVu Sans','Liberation Sans',sans-serif;">Lisennes</span></div>
<div class="clip" style="left:546px;top:634px;width:85px;height:17px"><span class="t" style="left:1.40px;top:-0.97px;font-size:13.2px;line-height:17px;letter-spacing:0.778px;color:#000;font-family:'DejaVu Sans','Liberation Sans',sans-serif;">Rouge</span></div>
<div class="clip" style="left:632px;top:634px;width:195px;height:17px"><span class="t" style="left:1.40px;top:-0.97px;font-size:13.2px;line-height:17px;letter-spacing:0.361px;color:#000;font-family:'DejaVu Sans','Liberation Sans',sans-serif;">Chateau de </span></div>
<div class="clip" style="left:632px;top:634px;width:195px;height:17px"><span class="t" style="left:85.62px;top:-0.97px;font-size:13.2px;line-height:17px;letter-spacing:0.482px;color:#000;font-family:'DejaVu Sans','Liberation Sans',sans-serif;">Lisennes</span></div>
<svg class="a" style="left:411.2px;top:366.9px" width="5" height="8" viewBox="0 0 5 8"><path d="M.9 1L4.100 4 .9 7z" fill="#f00" stroke="#000" stroke-width="1.200" stroke-linejoin="round"/></svg>
<svg class="a" style="left:540.2px;top:366.9px" width="5" height="8" viewBox="0 0 5 8"><path d="M.9 1L4.100 4 .9 7z" fill="#f00" stroke="#000" stroke-width="1.200" stroke-linejoin="round"/></svg>
<svg class="a" style="left:411.2px;top:383.9px" width="5" height="8" viewBox="0 0 5 8"><path d="M.9 1L4.100 4 .9 7z" fill="#f00" stroke="#000" stroke-width="1.200" stroke-linejoin="round"/></svg>
<svg class="a" style="left:411.2px;top:400.9px" width="5" height="8" viewBox="0 0 5 8"><path d="M.9 1L4.100 4 .9 7z" fill="#f00" stroke="#000" stroke-width="1.200" stroke-linejoin="round"/></svg>
<svg class="a" style="left:540.2px;top:400.9px" width="5" height="8" viewBox="0 0 5 8"><path d="M.9 1L4.100 4 .9 7z" fill="#f00" stroke="#000" stroke-width="1.200" stroke-linejoin="round"/></svg>
<svg class="a" style="left:411.2px;top:417.9px" width="5" height="8" viewBox="0 0 5 8"><path d="M.9 1L4.100 4 .9 7z" fill="#f00" stroke="#000" stroke-width="1.200" stroke-linejoin="round"/></svg>
<svg class="a" style="left:540.2px;top:417.9px" width="5" height="8" viewBox="0 0 5 8"><path d="M.9 1L4.100 4 .9 7z" fill="#f00" stroke="#000" stroke-width="1.200" stroke-linejoin="round"/></svg>
<svg class="a" style="left:411.2px;top:434.9px" width="5" height="8" viewBox="0 0 5 8"><path d="M.9 1L4.100 4 .9 7z" fill="#f00" stroke="#000" stroke-width="1.200" stroke-linejoin="round"/></svg>
<svg class="a" style="left:540.2px;top:434.9px" width="5" height="8" viewBox="0 0 5 8"><path d="M.9 1L4.100 4 .9 7z" fill="#f00" stroke="#000" stroke-width="1.200" stroke-linejoin="round"/></svg>
<svg class="a" style="left:411.2px;top:451.9px" width="5" height="8" viewBox="0 0 5 8"><path d="M.9 1L4.100 4 .9 7z" fill="#f00" stroke="#000" stroke-width="1.200" stroke-linejoin="round"/></svg>
<svg class="a" style="left:411.2px;top:468.9px" width="5" height="8" viewBox="0 0 5 8"><path d="M.9 1L4.100 4 .9 7z" fill="#f00" stroke="#000" stroke-width="1.200" stroke-linejoin="round"/></svg>
<svg class="a" style="left:540.2px;top:468.9px" width="5" height="8" viewBox="0 0 5 8"><path d="M.9 1L4.100 4 .9 7z" fill="#f00" stroke="#000" stroke-width="1.200" stroke-linejoin="round"/></svg>
<svg class="a" style="left:411.2px;top:485.9px" width="5" height="8" viewBox="0 0 5 8"><path d="M.9 1L4.100 4 .9 7z" fill="#f00" stroke="#000" stroke-width="1.200" stroke-linejoin="round"/></svg>
<svg class="a" style="left:540.2px;top:485.9px" width="5" height="8" viewBox="0 0 5 8"><path d="M.9 1L4.100 4 .9 7z" fill="#f00" stroke="#000" stroke-width="1.200" stroke-linejoin="round"/></svg>
<svg class="a" style="left:411.2px;top:502.9px" width="5" height="8" viewBox="0 0 5 8"><path d="M.9 1L4.100 4 .9 7z" fill="#f00" stroke="#000" stroke-width="1.200" stroke-linejoin="round"/></svg>
<svg class="a" style="left:540.2px;top:502.9px" width="5" height="8" viewBox="0 0 5 8"><path d="M.9 1L4.100 4 .9 7z" fill="#f00" stroke="#000" stroke-width="1.200" stroke-linejoin="round"/></svg>
<svg class="a" style="left:411.2px;top:519.9px" width="5" height="8" viewBox="0 0 5 8"><path d="M.9 1L4.100 4 .9 7z" fill="#f00" stroke="#000" stroke-width="1.200" stroke-linejoin="round"/></svg>
<svg class="a" style="left:540.2px;top:519.9px" width="5" height="8" viewBox="0 0 5 8"><path d="M.9 1L4.100 4 .9 7z" fill="#f00" stroke="#000" stroke-width="1.200" stroke-linejoin="round"/></svg>
<svg class="a" style="left:626.2px;top:519.9px" width="5" height="8" viewBox="0 0 5 8"><path d="M.9 1L4.100 4 .9 7z" fill="#f00" stroke="#000" stroke-width="1.200" stroke-linejoin="round"/></svg>
<svg class="a" style="left:411.2px;top:536.9px" width="5" height="8" viewBox="0 0 5 8"><path d="M.9 1L4.100 4 .9 7z" fill="#f00" stroke="#000" stroke-width="1.200" stroke-linejoin="round"/></svg>
<svg class="a" style="left:411.2px;top:553.9px" width="5" height="8" viewBox="0 0 5 8"><path d="M.9 1L4.100 4 .9 7z" fill="#f00" stroke="#000" stroke-width="1.200" stroke-linejoin="round"/></svg>
<svg class="a" style="left:540.2px;top:553.9px" width="5" height="8" viewBox="0 0 5 8"><path d="M.9 1L4.100 4 .9 7z" fill="#f00" stroke="#000" stroke-width="1.200" stroke-linejoin="round"/></svg>
<svg class="a" style="left:411.2px;top:570.9px" width="5" height="8" viewBox="0 0 5 8"><path d="M.9 1L4.100 4 .9 7z" fill="#f00" stroke="#000" stroke-width="1.200" stroke-linejoin="round"/></svg>
<svg class="a" style="left:411.2px;top:587.9px" width="5" height="8" viewBox="0 0 5 8"><path d="M.9 1L4.100 4 .9 7z" fill="#f00" stroke="#000" stroke-width="1.200" stroke-linejoin="round"/></svg>
<svg class="a" style="left:411.2px;top:604.9px" width="5" height="8" viewBox="0 0 5 8"><path d="M.9 1L4.100 4 .9 7z" fill="#f00" stroke="#000" stroke-width="1.200" stroke-linejoin="round"/></svg>
<svg class="a" style="left:411.2px;top:621.9px" width="5" height="8" viewBox="0 0 5 8"><path d="M.9 1L4.100 4 .9 7z" fill="#f00" stroke="#000" stroke-width="1.200" stroke-linejoin="round"/></svg>
<svg class="a" style="left:540.2px;top:621.9px" width="5" height="8" viewBox="0 0 5 8"><path d="M.9 1L4.100 4 .9 7z" fill="#f00" stroke="#000" stroke-width="1.200" stroke-linejoin="round"/></svg>
<svg class="a" style="left:411.2px;top:638.9px" width="5" height="8" viewBox="0 0 5 8"><path d="M.9 1L4.100 4 .9 7z" fill="#f00" stroke="#000" stroke-width="1.200" stroke-linejoin="round"/></svg>
<svg class="a" style="left:540.2px;top:638.9px" width="5" height="8" viewBox="0 0 5 8"><path d="M.9 1L4.100 4 .9 7z" fill="#f00" stroke="#000" stroke-width="1.200" stroke-linejoin="round"/></svg>
<span class="t" style="left:275.27px;top:326.18px;font-size:14.2px;line-height:18px;color:#fff;">A</span>
<span class="t" style="left:361.77px;top:326.18px;font-size:14.2px;line-height:18px;color:#e6e6e6;">B</span>
<span class="t" style="left:476.38px;top:326.18px;font-size:14.2px;line-height:18px;color:#e6e6e6;">C</span>
<span class="t" style="left:583.88px;top:326.18px;font-size:14.2px;line-height:18px;color:#e6e6e6;">D</span>
<span class="t" style="left:757.87px;top:326.18px;font-size:14.2px;line-height:18px;color:#e6e6e6;">E</span>
<span class="t" style="left:221.68px;top:346.49px;font-size:13.6px;line-height:18px;letter-spacing:0.281px;color:#fff;">1</span>
<span class="t" style="left:221.68px;top:363.49px;font-size:13.6px;line-height:18px;letter-spacing:0.281px;color:#ececec;">2</span>
<span class="t" style="left:221.68px;top:380.49px;font-size:13.6px;line-height:18px;letter-spacing:0.281px;color:#ececec;">3</span>
<span class="t" style="left:221.68px;top:397.49px;font-size:13.6px;line-height:18px;letter-spacing:0.281px;color:#ececec;">4</span>
<span class="t" style="left:221.68px;top:414.49px;font-size:13.6px;line-height:18px;letter-spacing:0.281px;color:#ececec;">5</span>
<span class="t" style="left:221.68px;top:431.49px;font-size:13.6px;line-height:18px;letter-spacing:0.281px;color:#ececec;">6</span>
<span class="t" style="left:221.68px;top:448.49px;font-size:13.6px;line-height:18px;letter-spacing:0.281px;color:#ececec;">7</span>
<span class="t" style="left:221.68px;top:465.49px;font-size:13.6px;line-height:18px;letter-spacing:0.281px;color:#ececec;">8</span>
<span class="t" style="left:221.68px;top:482.49px;font-size:13.6px;line-height:18px;letter-spacing:0.281px;color:#ececec;">9</span>
<span class="t" style="left:217.76px;top:499.49px;font-size:13.6px;line-height:18px;letter-spacing:0.273px;color:#ececec;">10</span>
<span class="t" style="left:217.76px;top:516.49px;font-size:13.6px;line-height:18px;letter-spacing:0.773px;color:#ececec;">11</span>
<span class="t" style="left:217.76px;top:533.49px;font-size:13.6px;line-height:18px;letter-spacing:0.273px;color:#ececec;">12</span>
<span class="t" style="left:217.76px;top:550.49px;font-size:13.6px;line-height:18px;letter-spacing:0.273px;color:#ececec;">13</span>
<span class="t" style="left:217.76px;top:567.49px;font-size:13.6px;line-height:18px;letter-spacing:0.273px;color:#ececec;">14</span>
<span class="t" style="left:217.76px;top:584.49px;font-size:13.6px;line-height:18px;letter-spacing:0.273px;color:#ececec;">15</span>
<span class="t" style="left:217.76px;top:601.49px;font-size:13.6px;line-height:18px;letter-spacing:0.273px;color:#ececec;">16</span>
<span class="t" style="left:217.76px;top:618.49px;font-size:13.6px;line-height:18px;letter-spacing:0.273px;color:#ececec;">17</span>
<span class="t" style="left:217.76px;top:635.49px;font-size:13.6px;line-height:18px;letter-spacing:0.273px;color:#ececec;">18</span>
<div class="a" id="cursor" style="left:244px;top:346px;width:71px;height:16px"></div>
<div class="a" style="left:313px;top:360px;width:5px;height:5px;background:#e95420;box-shadow:-1px -1px 0 #fff"></div>
</div>
</body>
</html>
